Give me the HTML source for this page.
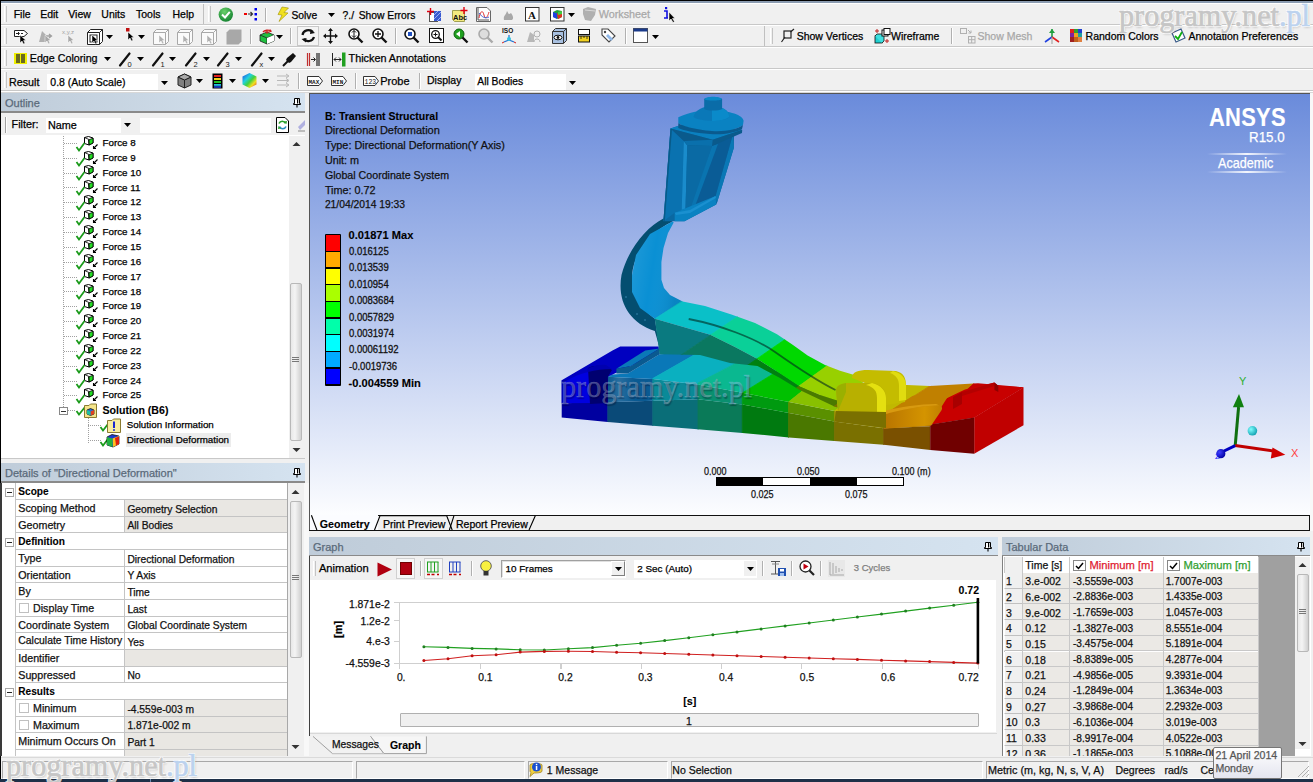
<!DOCTYPE html><html><head><meta charset="utf-8"><style>
*{margin:0;padding:0;box-sizing:border-box}
html,body{width:1313px;height:782px;overflow:hidden;background:#f0f0f0;font-family:"Liberation Sans",sans-serif}
.t{position:absolute;white-space:nowrap;line-height:1.15;-webkit-text-stroke:0.25px currentColor}
.r{position:absolute}
svg{position:absolute;overflow:visible}
</style></head><body><div class="r" style="left:0px;top:0px;width:1313px;height:1px;background:#000"></div>
<div class="r" style="left:0px;top:1px;width:1313px;height:2px;background:#8a9bb0"></div>
<div class="r" style="left:0px;top:3px;width:1313px;height:1px;background:#fff"></div>
<div class="r" style="left:0px;top:0px;width:1px;height:782px;background:#000"></div>
<div class="r" style="left:1px;top:24px;width:1312px;height:1px;background:#c8c8c8"></div>
<div class="r" style="left:1px;top:25px;width:1312px;height:1px;background:#fff"></div>
<div class="r" style="left:1px;top:46px;width:1312px;height:1px;background:#c8c8c8"></div>
<div class="r" style="left:1px;top:47px;width:1312px;height:1px;background:#fff"></div>
<div class="r" style="left:1px;top:68px;width:1312px;height:1px;background:#c8c8c8"></div>
<div class="r" style="left:1px;top:69px;width:1312px;height:1px;background:#fff"></div>
<div class="r" style="left:1px;top:90px;width:1312px;height:1px;background:#c8c8c8"></div>
<div class="r" style="left:1px;top:91px;width:1312px;height:1px;background:#fff"></div>
<div class="r" style="left:1px;top:92px;width:1312px;height:1px;background:#d8d8d8"></div>
<div class="r" style="left:1px;top:93px;width:304px;height:18.5px;background:linear-gradient(90deg,#bfccd9,#d5e3f0)"></div>
<div class="r" style="left:1px;top:111px;width:304px;height:1.5px;background:#8a8a8a"></div>
<div class="t" style="left:5px;top:96.8px;font-size:11px;color:#5a6a7a;">Outline</div>
<div class="r" style="left:1px;top:113px;width:304px;height:22px;background:#f0f0f0"></div>
<div class="r" style="left:1px;top:135px;width:304px;height:323px;background:#fff"></div>
<div class="r" style="left:1px;top:463px;width:304px;height:19px;background:linear-gradient(90deg,#bfccd9,#d5e3f0)"></div>
<div class="r" style="left:1px;top:481px;width:304px;height:1.5px;background:#8a8a8a"></div>
<div class="t" style="left:5px;top:466.8px;font-size:11px;color:#5a6a7a;">Details of "Directional Deformation"</div>
<div class="r" style="left:1px;top:483px;width:304px;height:273px;background:#fff"></div>
<div class="r" style="left:309px;top:93px;width:1002px;height:1px;background:#555"></div>
<div class="r" style="left:309px;top:93px;width:1px;height:438px;background:#555"></div>
<div class="r" style="left:310px;top:94px;width:1000px;height:421px;background:linear-gradient(180deg,rgb(106,139,219) 0%,rgb(252,253,255) 100%)"></div>
<div class="r" style="left:1310px;top:93px;width:1px;height:438px;background:#555"></div>
<div class="r" style="left:378px;top:515px;width:932px;height:1.2px;background:#111"></div>
<div class="r" style="left:378px;top:516px;width:932px;height:14px;background:#f0f0f0"></div>
<div class="r" style="left:310px;top:515px;width:68px;height:15px;background:#fbfcff"></div>
<div class="r" style="left:309px;top:530px;width:1002px;height:1px;background:#111"></div>
<div class="r" style="left:309px;top:537px;width:689px;height:19px;background:linear-gradient(90deg,#bfccd9,#d5e3f0)"></div>
<div class="r" style="left:309px;top:555px;width:689px;height:1.2px;background:#8a8a8a"></div>
<div class="t" style="left:313px;top:540.8px;font-size:11px;color:#5a6a7a;">Graph</div>
<div class="r" style="left:309px;top:556px;width:689px;height:24px;background:#f0f0f0"></div>
<div class="r" style="left:309px;top:580px;width:689px;height:152px;background:#fff"></div>
<div class="r" style="left:1002px;top:537px;width:309px;height:19px;background:linear-gradient(90deg,#bfccd9,#d5e3f0)"></div>
<div class="r" style="left:1002px;top:555px;width:311px;height:1.2px;background:#8a8a8a"></div>
<div class="t" style="left:1006px;top:540.8px;font-size:11px;color:#5a6a7a;">Tabular Data</div>
<div class="r" style="left:1002px;top:556px;width:309px;height:200px;background:#fff"></div>
<div class="r" style="left:1258px;top:556px;width:37px;height:200px;background:#a0a0a0"></div>
<div class="r" style="left:1px;top:756px;width:1312px;height:1px;background:#d0d0d0"></div>
<div class="r" style="left:1px;top:779px;width:1312px;height:3px;background:#1a2a3a"></div>
<div class="r" style="left:5px;top:117px;width:2px;height:16px;border-left:1px solid #a0a0a0;border-right:1px solid #fff"></div>
<div class="t" style="left:11.6px;top:117.5px;font-size:10.8px;color:#000;">Filter:</div>
<div class="r" style="left:46px;top:118px;width:87px;height:15px;background:#fff"></div>
<div class="r" style="left:121px;top:118px;width:12px;height:15px;background:#f0f0f0"></div>
<div class="t" style="left:48px;top:119px;font-size:10.8px;color:#000;">Name</div>
<svg style="left:124px;top:123px" width="8" height="5"><path d="M0 0H7L3.5 4Z" fill="#000"/></svg>
<div class="r" style="left:140px;top:118px;width:131px;height:15px;background:#fff"></div>
<svg style="left:276px;top:117px" width="13" height="16" viewBox="0 0 13 16"><path d="M0.5 0.5H9L12.5 4V15.5H0.5Z" fill="#fff" stroke="#000"/><path d="M3 6.5A3.5 3.5 0 0 1 9.5 6.5" fill="none" stroke="#2aa02a" stroke-width="1.6"/><path d="M8 4.5L10.5 7L11 4Z" fill="#2aa02a"/><path d="M10 9.5A3.5 3.5 0 0 1 3.5 9.5" fill="none" stroke="#2a8ac0" stroke-width="1.6"/><path d="M5 11.5L2.5 9L2 12Z" fill="#2aa02a"/></svg>
<svg style="left:296px;top:119px" width="9" height="14"><path d="M9 1L2 8L4 11L9 6Z" fill="#b0b0e0"/><path d="M2 12H9" stroke="#888"/></svg>
<div class="r" style="left:289px;top:136px;width:16px;height:322px;background:#f0f0f0"></div>
<svg style="left:292px;top:141px" width="10" height="6"><path d="M0.5 5L4.5 1L8.5 5Z" fill="#333"/></svg>
<svg style="left:292px;top:447px" width="10" height="6"><path d="M0.5 1L4.5 5L8.5 1Z" fill="#333"/></svg>
<div class="r" style="left:290px;top:283px;width:12px;height:158px;background:linear-gradient(90deg,#e8e8e8,#f4f4f4 40%,#d0d0d0);border:1px solid #b8b8b8;border-radius:2px"></div>
<svg style="left:292px;top:357px" width="8" height="6"><path d="M0 0.5H7M0 2.5H7M0 4.5H7" stroke="#777"/></svg>
<svg style="left:63px;top:136px" width="1" height="275"><line x1="0.5" y1="0" x2="0.5" y2="275" stroke="#a0a0a0" stroke-dasharray="1,1"/></svg>
<svg style="left:64px;top:142.9px" width="13" height="1"><line x1="0" y1="0.5" x2="13" y2="0.5" stroke="#a0a0a0" stroke-dasharray="1,1"/></svg>
<svg style="left:76px;top:135.70000000000002px" width="23" height="16" viewBox="0 0 23 16"><path d="M8.5 1.5L12.5 0.5L17 2V7L13 9L8.5 7.5Z" fill="#fff" stroke="#000" stroke-width="1"/><path d="M12.5 4L17 2.2V7L13 9Z" fill="#22dd22" stroke="#000" stroke-width="0.8"/><path d="M8.5 1.5L13 3.5V9" fill="none" stroke="#000" stroke-width="0.8"/><path d="M0.5 11L3 14.5L8.5 7" fill="none" stroke="#1a9a1a" stroke-width="1.8"/><path d="M21.5 8.5L17.5 12.5M17.5 10V12.5H20" fill="none" stroke="#000" stroke-width="1.1"/></svg>
<div class="t" style="left:102.5px;top:137.1px;font-size:9.8px;color:#000;">Force 8</div>
<svg style="left:64px;top:157.7px" width="13" height="1"><line x1="0" y1="0.5" x2="13" y2="0.5" stroke="#a0a0a0" stroke-dasharray="1,1"/></svg>
<svg style="left:76px;top:150.54700000000003px" width="23" height="16" viewBox="0 0 23 16"><path d="M8.5 1.5L12.5 0.5L17 2V7L13 9L8.5 7.5Z" fill="#fff" stroke="#000" stroke-width="1"/><path d="M12.5 4L17 2.2V7L13 9Z" fill="#22dd22" stroke="#000" stroke-width="0.8"/><path d="M8.5 1.5L13 3.5V9" fill="none" stroke="#000" stroke-width="0.8"/><path d="M0.5 11L3 14.5L8.5 7" fill="none" stroke="#1a9a1a" stroke-width="1.8"/><path d="M21.5 8.5L17.5 12.5M17.5 10V12.5H20" fill="none" stroke="#000" stroke-width="1.1"/></svg>
<div class="t" style="left:102.5px;top:151.947px;font-size:9.8px;color:#000;">Force 9</div>
<svg style="left:64px;top:172.6px" width="13" height="1"><line x1="0" y1="0.5" x2="13" y2="0.5" stroke="#a0a0a0" stroke-dasharray="1,1"/></svg>
<svg style="left:76px;top:165.394px" width="23" height="16" viewBox="0 0 23 16"><path d="M8.5 1.5L12.5 0.5L17 2V7L13 9L8.5 7.5Z" fill="#fff" stroke="#000" stroke-width="1"/><path d="M12.5 4L17 2.2V7L13 9Z" fill="#22dd22" stroke="#000" stroke-width="0.8"/><path d="M8.5 1.5L13 3.5V9" fill="none" stroke="#000" stroke-width="0.8"/><path d="M0.5 11L3 14.5L8.5 7" fill="none" stroke="#1a9a1a" stroke-width="1.8"/><path d="M21.5 8.5L17.5 12.5M17.5 10V12.5H20" fill="none" stroke="#000" stroke-width="1.1"/></svg>
<div class="t" style="left:102.5px;top:166.79399999999998px;font-size:9.8px;color:#000;">Force 10</div>
<svg style="left:64px;top:187.4px" width="13" height="1"><line x1="0" y1="0.5" x2="13" y2="0.5" stroke="#a0a0a0" stroke-dasharray="1,1"/></svg>
<svg style="left:76px;top:180.241px" width="23" height="16" viewBox="0 0 23 16"><path d="M8.5 1.5L12.5 0.5L17 2V7L13 9L8.5 7.5Z" fill="#fff" stroke="#000" stroke-width="1"/><path d="M12.5 4L17 2.2V7L13 9Z" fill="#22dd22" stroke="#000" stroke-width="0.8"/><path d="M8.5 1.5L13 3.5V9" fill="none" stroke="#000" stroke-width="0.8"/><path d="M0.5 11L3 14.5L8.5 7" fill="none" stroke="#1a9a1a" stroke-width="1.8"/><path d="M21.5 8.5L17.5 12.5M17.5 10V12.5H20" fill="none" stroke="#000" stroke-width="1.1"/></svg>
<div class="t" style="left:102.5px;top:181.641px;font-size:9.8px;color:#000;">Force 11</div>
<svg style="left:64px;top:202.3px" width="13" height="1"><line x1="0" y1="0.5" x2="13" y2="0.5" stroke="#a0a0a0" stroke-dasharray="1,1"/></svg>
<svg style="left:76px;top:195.08800000000002px" width="23" height="16" viewBox="0 0 23 16"><path d="M8.5 1.5L12.5 0.5L17 2V7L13 9L8.5 7.5Z" fill="#fff" stroke="#000" stroke-width="1"/><path d="M12.5 4L17 2.2V7L13 9Z" fill="#22dd22" stroke="#000" stroke-width="0.8"/><path d="M8.5 1.5L13 3.5V9" fill="none" stroke="#000" stroke-width="0.8"/><path d="M0.5 11L3 14.5L8.5 7" fill="none" stroke="#1a9a1a" stroke-width="1.8"/><path d="M21.5 8.5L17.5 12.5M17.5 10V12.5H20" fill="none" stroke="#000" stroke-width="1.1"/></svg>
<div class="t" style="left:102.5px;top:196.488px;font-size:9.8px;color:#000;">Force 12</div>
<svg style="left:64px;top:217.1px" width="13" height="1"><line x1="0" y1="0.5" x2="13" y2="0.5" stroke="#a0a0a0" stroke-dasharray="1,1"/></svg>
<svg style="left:76px;top:209.935px" width="23" height="16" viewBox="0 0 23 16"><path d="M8.5 1.5L12.5 0.5L17 2V7L13 9L8.5 7.5Z" fill="#fff" stroke="#000" stroke-width="1"/><path d="M12.5 4L17 2.2V7L13 9Z" fill="#22dd22" stroke="#000" stroke-width="0.8"/><path d="M8.5 1.5L13 3.5V9" fill="none" stroke="#000" stroke-width="0.8"/><path d="M0.5 11L3 14.5L8.5 7" fill="none" stroke="#1a9a1a" stroke-width="1.8"/><path d="M21.5 8.5L17.5 12.5M17.5 10V12.5H20" fill="none" stroke="#000" stroke-width="1.1"/></svg>
<div class="t" style="left:102.5px;top:211.33499999999998px;font-size:9.8px;color:#000;">Force 13</div>
<svg style="left:64px;top:232.0px" width="13" height="1"><line x1="0" y1="0.5" x2="13" y2="0.5" stroke="#a0a0a0" stroke-dasharray="1,1"/></svg>
<svg style="left:76px;top:224.782px" width="23" height="16" viewBox="0 0 23 16"><path d="M8.5 1.5L12.5 0.5L17 2V7L13 9L8.5 7.5Z" fill="#fff" stroke="#000" stroke-width="1"/><path d="M12.5 4L17 2.2V7L13 9Z" fill="#22dd22" stroke="#000" stroke-width="0.8"/><path d="M8.5 1.5L13 3.5V9" fill="none" stroke="#000" stroke-width="0.8"/><path d="M0.5 11L3 14.5L8.5 7" fill="none" stroke="#1a9a1a" stroke-width="1.8"/><path d="M21.5 8.5L17.5 12.5M17.5 10V12.5H20" fill="none" stroke="#000" stroke-width="1.1"/></svg>
<div class="t" style="left:102.5px;top:226.182px;font-size:9.8px;color:#000;">Force 14</div>
<svg style="left:64px;top:246.8px" width="13" height="1"><line x1="0" y1="0.5" x2="13" y2="0.5" stroke="#a0a0a0" stroke-dasharray="1,1"/></svg>
<svg style="left:76px;top:239.62900000000002px" width="23" height="16" viewBox="0 0 23 16"><path d="M8.5 1.5L12.5 0.5L17 2V7L13 9L8.5 7.5Z" fill="#fff" stroke="#000" stroke-width="1"/><path d="M12.5 4L17 2.2V7L13 9Z" fill="#22dd22" stroke="#000" stroke-width="0.8"/><path d="M8.5 1.5L13 3.5V9" fill="none" stroke="#000" stroke-width="0.8"/><path d="M0.5 11L3 14.5L8.5 7" fill="none" stroke="#1a9a1a" stroke-width="1.8"/><path d="M21.5 8.5L17.5 12.5M17.5 10V12.5H20" fill="none" stroke="#000" stroke-width="1.1"/></svg>
<div class="t" style="left:102.5px;top:241.029px;font-size:9.8px;color:#000;">Force 15</div>
<svg style="left:64px;top:261.7px" width="13" height="1"><line x1="0" y1="0.5" x2="13" y2="0.5" stroke="#a0a0a0" stroke-dasharray="1,1"/></svg>
<svg style="left:76px;top:254.476px" width="23" height="16" viewBox="0 0 23 16"><path d="M8.5 1.5L12.5 0.5L17 2V7L13 9L8.5 7.5Z" fill="#fff" stroke="#000" stroke-width="1"/><path d="M12.5 4L17 2.2V7L13 9Z" fill="#22dd22" stroke="#000" stroke-width="0.8"/><path d="M8.5 1.5L13 3.5V9" fill="none" stroke="#000" stroke-width="0.8"/><path d="M0.5 11L3 14.5L8.5 7" fill="none" stroke="#1a9a1a" stroke-width="1.8"/><path d="M21.5 8.5L17.5 12.5M17.5 10V12.5H20" fill="none" stroke="#000" stroke-width="1.1"/></svg>
<div class="t" style="left:102.5px;top:255.87599999999998px;font-size:9.8px;color:#000;">Force 16</div>
<svg style="left:64px;top:276.5px" width="13" height="1"><line x1="0" y1="0.5" x2="13" y2="0.5" stroke="#a0a0a0" stroke-dasharray="1,1"/></svg>
<svg style="left:76px;top:269.32300000000004px" width="23" height="16" viewBox="0 0 23 16"><path d="M8.5 1.5L12.5 0.5L17 2V7L13 9L8.5 7.5Z" fill="#fff" stroke="#000" stroke-width="1"/><path d="M12.5 4L17 2.2V7L13 9Z" fill="#22dd22" stroke="#000" stroke-width="0.8"/><path d="M8.5 1.5L13 3.5V9" fill="none" stroke="#000" stroke-width="0.8"/><path d="M0.5 11L3 14.5L8.5 7" fill="none" stroke="#1a9a1a" stroke-width="1.8"/><path d="M21.5 8.5L17.5 12.5M17.5 10V12.5H20" fill="none" stroke="#000" stroke-width="1.1"/></svg>
<div class="t" style="left:102.5px;top:270.723px;font-size:9.8px;color:#000;">Force 17</div>
<svg style="left:64px;top:291.4px" width="13" height="1"><line x1="0" y1="0.5" x2="13" y2="0.5" stroke="#a0a0a0" stroke-dasharray="1,1"/></svg>
<svg style="left:76px;top:284.17px" width="23" height="16" viewBox="0 0 23 16"><path d="M8.5 1.5L12.5 0.5L17 2V7L13 9L8.5 7.5Z" fill="#fff" stroke="#000" stroke-width="1"/><path d="M12.5 4L17 2.2V7L13 9Z" fill="#22dd22" stroke="#000" stroke-width="0.8"/><path d="M8.5 1.5L13 3.5V9" fill="none" stroke="#000" stroke-width="0.8"/><path d="M0.5 11L3 14.5L8.5 7" fill="none" stroke="#1a9a1a" stroke-width="1.8"/><path d="M21.5 8.5L17.5 12.5M17.5 10V12.5H20" fill="none" stroke="#000" stroke-width="1.1"/></svg>
<div class="t" style="left:102.5px;top:285.57px;font-size:9.8px;color:#000;">Force 18</div>
<svg style="left:64px;top:306.2px" width="13" height="1"><line x1="0" y1="0.5" x2="13" y2="0.5" stroke="#a0a0a0" stroke-dasharray="1,1"/></svg>
<svg style="left:76px;top:299.017px" width="23" height="16" viewBox="0 0 23 16"><path d="M8.5 1.5L12.5 0.5L17 2V7L13 9L8.5 7.5Z" fill="#fff" stroke="#000" stroke-width="1"/><path d="M12.5 4L17 2.2V7L13 9Z" fill="#22dd22" stroke="#000" stroke-width="0.8"/><path d="M8.5 1.5L13 3.5V9" fill="none" stroke="#000" stroke-width="0.8"/><path d="M0.5 11L3 14.5L8.5 7" fill="none" stroke="#1a9a1a" stroke-width="1.8"/><path d="M21.5 8.5L17.5 12.5M17.5 10V12.5H20" fill="none" stroke="#000" stroke-width="1.1"/></svg>
<div class="t" style="left:102.5px;top:300.417px;font-size:9.8px;color:#000;">Force 19</div>
<svg style="left:64px;top:321.1px" width="13" height="1"><line x1="0" y1="0.5" x2="13" y2="0.5" stroke="#a0a0a0" stroke-dasharray="1,1"/></svg>
<svg style="left:76px;top:313.864px" width="23" height="16" viewBox="0 0 23 16"><path d="M8.5 1.5L12.5 0.5L17 2V7L13 9L8.5 7.5Z" fill="#fff" stroke="#000" stroke-width="1"/><path d="M12.5 4L17 2.2V7L13 9Z" fill="#22dd22" stroke="#000" stroke-width="0.8"/><path d="M8.5 1.5L13 3.5V9" fill="none" stroke="#000" stroke-width="0.8"/><path d="M0.5 11L3 14.5L8.5 7" fill="none" stroke="#1a9a1a" stroke-width="1.8"/><path d="M21.5 8.5L17.5 12.5M17.5 10V12.5H20" fill="none" stroke="#000" stroke-width="1.1"/></svg>
<div class="t" style="left:102.5px;top:315.26399999999995px;font-size:9.8px;color:#000;">Force 20</div>
<svg style="left:64px;top:335.9px" width="13" height="1"><line x1="0" y1="0.5" x2="13" y2="0.5" stroke="#a0a0a0" stroke-dasharray="1,1"/></svg>
<svg style="left:76px;top:328.711px" width="23" height="16" viewBox="0 0 23 16"><path d="M8.5 1.5L12.5 0.5L17 2V7L13 9L8.5 7.5Z" fill="#fff" stroke="#000" stroke-width="1"/><path d="M12.5 4L17 2.2V7L13 9Z" fill="#22dd22" stroke="#000" stroke-width="0.8"/><path d="M8.5 1.5L13 3.5V9" fill="none" stroke="#000" stroke-width="0.8"/><path d="M0.5 11L3 14.5L8.5 7" fill="none" stroke="#1a9a1a" stroke-width="1.8"/><path d="M21.5 8.5L17.5 12.5M17.5 10V12.5H20" fill="none" stroke="#000" stroke-width="1.1"/></svg>
<div class="t" style="left:102.5px;top:330.111px;font-size:9.8px;color:#000;">Force 21</div>
<svg style="left:64px;top:350.8px" width="13" height="1"><line x1="0" y1="0.5" x2="13" y2="0.5" stroke="#a0a0a0" stroke-dasharray="1,1"/></svg>
<svg style="left:76px;top:343.55800000000005px" width="23" height="16" viewBox="0 0 23 16"><path d="M8.5 1.5L12.5 0.5L17 2V7L13 9L8.5 7.5Z" fill="#fff" stroke="#000" stroke-width="1"/><path d="M12.5 4L17 2.2V7L13 9Z" fill="#22dd22" stroke="#000" stroke-width="0.8"/><path d="M8.5 1.5L13 3.5V9" fill="none" stroke="#000" stroke-width="0.8"/><path d="M0.5 11L3 14.5L8.5 7" fill="none" stroke="#1a9a1a" stroke-width="1.8"/><path d="M21.5 8.5L17.5 12.5M17.5 10V12.5H20" fill="none" stroke="#000" stroke-width="1.1"/></svg>
<div class="t" style="left:102.5px;top:344.958px;font-size:9.8px;color:#000;">Force 22</div>
<svg style="left:64px;top:365.6px" width="13" height="1"><line x1="0" y1="0.5" x2="13" y2="0.5" stroke="#a0a0a0" stroke-dasharray="1,1"/></svg>
<svg style="left:76px;top:358.40500000000003px" width="23" height="16" viewBox="0 0 23 16"><path d="M8.5 1.5L12.5 0.5L17 2V7L13 9L8.5 7.5Z" fill="#fff" stroke="#000" stroke-width="1"/><path d="M12.5 4L17 2.2V7L13 9Z" fill="#22dd22" stroke="#000" stroke-width="0.8"/><path d="M8.5 1.5L13 3.5V9" fill="none" stroke="#000" stroke-width="0.8"/><path d="M0.5 11L3 14.5L8.5 7" fill="none" stroke="#1a9a1a" stroke-width="1.8"/><path d="M21.5 8.5L17.5 12.5M17.5 10V12.5H20" fill="none" stroke="#000" stroke-width="1.1"/></svg>
<div class="t" style="left:102.5px;top:359.805px;font-size:9.8px;color:#000;">Force 23</div>
<svg style="left:64px;top:380.5px" width="13" height="1"><line x1="0" y1="0.5" x2="13" y2="0.5" stroke="#a0a0a0" stroke-dasharray="1,1"/></svg>
<svg style="left:76px;top:373.252px" width="23" height="16" viewBox="0 0 23 16"><path d="M8.5 1.5L12.5 0.5L17 2V7L13 9L8.5 7.5Z" fill="#fff" stroke="#000" stroke-width="1"/><path d="M12.5 4L17 2.2V7L13 9Z" fill="#22dd22" stroke="#000" stroke-width="0.8"/><path d="M8.5 1.5L13 3.5V9" fill="none" stroke="#000" stroke-width="0.8"/><path d="M0.5 11L3 14.5L8.5 7" fill="none" stroke="#1a9a1a" stroke-width="1.8"/><path d="M21.5 8.5L17.5 12.5M17.5 10V12.5H20" fill="none" stroke="#000" stroke-width="1.1"/></svg>
<div class="t" style="left:102.5px;top:374.652px;font-size:9.8px;color:#000;">Force 24</div>
<svg style="left:64px;top:395.3px" width="13" height="1"><line x1="0" y1="0.5" x2="13" y2="0.5" stroke="#a0a0a0" stroke-dasharray="1,1"/></svg>
<svg style="left:76px;top:388.099px" width="23" height="16" viewBox="0 0 23 16"><path d="M8.5 1.5L12.5 0.5L17 2V7L13 9L8.5 7.5Z" fill="#fff" stroke="#000" stroke-width="1"/><path d="M12.5 4L17 2.2V7L13 9Z" fill="#22dd22" stroke="#000" stroke-width="0.8"/><path d="M8.5 1.5L13 3.5V9" fill="none" stroke="#000" stroke-width="0.8"/><path d="M0.5 11L3 14.5L8.5 7" fill="none" stroke="#1a9a1a" stroke-width="1.8"/><path d="M21.5 8.5L17.5 12.5M17.5 10V12.5H20" fill="none" stroke="#000" stroke-width="1.1"/></svg>
<div class="t" style="left:102.5px;top:389.49899999999997px;font-size:9.8px;color:#000;">Force 25</div>
<div class="r" style="left:59px;top:407px;width:9px;height:8px;background:#fff;border:1px solid #888"></div>
<div class="r" style="left:61px;top:410.5px;width:5px;height:1px;background:#333"></div>
<svg style="left:68px;top:410px" width="8" height="1"><line x1="0" y1="0.5" x2="8" y2="0.5" stroke="#a0a0a0" stroke-dasharray="1,1"/></svg>
<svg style="left:76px;top:403px" width="25" height="16" viewBox="0 0 25 16"><path d="M0.5 8L3 11.5L9 4" fill="none" stroke="#1a9a1a" stroke-width="1.8"/><path d="M8.5 2.5H13L14.5 1H20.5V14.5H8.5Z" fill="#f4e48a" stroke="#8a7a30"/><path d="M11 7L14.5 5.5L18 7V11L14.5 12.5L11 11Z" fill="#2a6ad0" stroke="#000" stroke-width="0.7"/><path d="M14.5 8.5L18 7V11L14.5 12.5Z" fill="#e04020"/><path d="M11 7L14.5 8.5V12.5L11 11Z" fill="#20c0a0"/></svg>
<div class="t" style="left:102.5px;top:404.4px;font-size:10.6px;color:#000;font-weight:bold;-webkit-text-stroke:0.1px currentColor;">Solution (B6)</div>
<svg style="left:88px;top:418px" width="1" height="26"><line x1="0.5" y1="0" x2="0.5" y2="26" stroke="#a0a0a0" stroke-dasharray="1,1"/></svg>
<svg style="left:88px;top:424.5px" width="13" height="1"><line x1="0" y1="0.5" x2="13" y2="0.5" stroke="#a0a0a0" stroke-dasharray="1,1"/></svg>
<svg style="left:100px;top:417.5px" width="25" height="16" viewBox="0 0 25 16"><path d="M0.5 9L3 12.5L8 6" fill="none" stroke="#1a9a1a" stroke-width="1.8"/><path d="M7.5 2.5H12L13.5 1H20.5V14.5H7.5Z" fill="#f8eea0" stroke="#8a7a30"/><path d="M14 3.5V10" stroke="#1a2ad0" stroke-width="2"/><circle cx="14" cy="12" r="1" fill="#1a2ad0"/></svg>
<div class="t" style="left:126.7px;top:419.2px;font-size:9.8px;color:#000;">Solution Information</div>
<svg style="left:88px;top:439.7px" width="13" height="1"><line x1="0" y1="0.5" x2="13" y2="0.5" stroke="#a0a0a0" stroke-dasharray="1,1"/></svg>
<div class="r" style="left:126px;top:432.8px;width:105px;height:14px;background:#ececec"></div>
<svg style="left:100px;top:432.7px" width="25" height="16" viewBox="0 0 25 16"><path d="M0.5 9L3 12.5L8 6" fill="none" stroke="#1a9a1a" stroke-width="1.8"/><path d="M7 4L12 1.5L19 3V11L13 14L7 12Z" fill="#1a3ad0" stroke="#000" stroke-width="0.7"/><path d="M12.5 5.5L19 3V11L13 14Z" fill="#ffc020"/><path d="M15 5L19 3.5V11L16 12.5Z" fill="#e02010"/><path d="M7 4L12.5 5.5V14L7 12Z" fill="#20b040"/></svg>
<div class="t" style="left:126.7px;top:434.4px;font-size:9.8px;color:#000;">Directional Deformation</div>
<div class="r" style="left:1px;top:458px;width:304px;height:1px;background:#c8c8c8"></div>
<div class="r" style="left:4px;top:6px;width:3px;height:16px;border-left:1px solid #fff;border-right:1.5px solid #c4c4c4"></div>
<div class="t" style="left:13.7px;top:8.2px;font-size:10.5px;color:#000;">File</div>
<div class="t" style="left:40.2px;top:8.2px;font-size:10.5px;color:#000;">Edit</div>
<div class="t" style="left:68.3px;top:8.2px;font-size:10.5px;color:#000;">View</div>
<div class="t" style="left:101.3px;top:8.2px;font-size:10.5px;color:#000;">Units</div>
<div class="t" style="left:136px;top:8.2px;font-size:10.5px;color:#000;">Tools</div>
<div class="t" style="left:172.5px;top:8.2px;font-size:10.5px;color:#000;">Help</div>
<div class="r" style="left:203px;top:4px;width:1px;height:20px;background:#c0c0c0"></div>
<div class="r" style="left:208px;top:6px;width:3px;height:16px;border-left:1px solid #fff;border-right:1.5px solid #c4c4c4"></div>
<svg style="left:218px;top:7px" width="16" height="16" viewBox="0 0 16 16"><defs><radialGradient id="gc" cx="0.4" cy="0.3" r="0.8"><stop offset="0" stop-color="#6ad06a"/><stop offset="1" stop-color="#0a7a2a"/></radialGradient></defs><circle cx="7.8" cy="7.6" r="7.2" fill="url(#gc)"/><path d="M4 7.5L7 10.5L11.8 4.8" fill="none" stroke="#fff" stroke-width="2"/></svg>
<svg style="left:244px;top:8px" width="14" height="13" viewBox="0 0 14 13"><rect x="0" y="5" width="3" height="2" fill="#e00"/><path d="M4 6H8M6.5 4L8.5 6L6.5 8" stroke="#333" fill="none" stroke-width="1.2"/><rect x="10.5" y="0" width="2.5" height="2.5" fill="#00e"/><rect x="10.5" y="5" width="2.5" height="2.5" fill="#00e"/><rect x="10.5" y="10" width="2.5" height="2.5" fill="#00e"/></svg>
<div class="r" style="left:265px;top:8px;width:2px;height:14px;border-left:1px solid #b0b0b0;border-right:1px solid #fff"></div>
<svg style="left:277px;top:7px" width="12" height="15" viewBox="0 0 12 15"><path d="M5 0L11.5 1L7 5.5L11 6L2 14.5L5 8L1 7.5Z" fill="#f0e020" stroke="#a09000" stroke-width="0.6"/></svg>
<div class="t" style="left:291.4px;top:9.6px;font-size:10.3px;color:#000;">Solve</div>
<svg style="left:328px;top:13px" width="7" height="4"><path d="M0 0H7L3.5 4Z" fill="#000"/></svg>
<div class="t" style="left:342.6px;top:9.6px;font-size:10.3px;color:#000;">?./</div>
<div class="t" style="left:358.7px;top:9.6px;font-size:10.3px;color:#000;">Show Errors</div>
<svg style="left:426px;top:8px" width="17" height="15" viewBox="0 0 17 15"><rect x="3.5" y="4.5" width="8" height="9" fill="#fff" stroke="#555"/><path d="M8 3H15V13H8Z" fill="#3a5ad0"/><path d="M8 11L15 4M8 7L12 3M11 13L15 9" stroke="#9ab0f0"/><path d="M4.5 0V7M1 3.5H8" stroke="#e00010" stroke-width="1.4"/></svg>
<svg style="left:452px;top:7px" width="16" height="15" viewBox="0 0 16 15"><path d="M0.5 3.5H12.5V14.5H2.5L0.5 12.5Z" fill="#f4ea80" stroke="#a0a050"/><text x="1" y="12.5" font-family="Liberation Sans" font-weight="bold" font-size="7.5" fill="#111">Abc</text><path d="M12 0V7M8.5 3.5H15.5" stroke="#e00010" stroke-width="1.4"/></svg>
<svg style="left:476px;top:7px" width="15" height="15" viewBox="0 0 15 15"><path d="M0.5 0.5H11L14.5 4V14.5H0.5Z" fill="#fff" stroke="#666"/><path d="M2 1V13H13" stroke="#555" fill="none"/><path d="M3 11C5 2 7 4 8 8S11 12 13 5" stroke="#e03030" fill="none"/><path d="M3 6C6 10 9 12 13 10" stroke="#4060d0" fill="none"/></svg>
<svg style="left:503px;top:10px" width="11" height="11" viewBox="0 0 11 11"><path d="M1 10C0 6 3 5 4 1C6 4 5 5 8 3C10 6 11 8 9 10Z" fill="#a8a8a8"/></svg>
<svg style="left:525px;top:7px" width="15" height="15" viewBox="0 0 15 15"><rect x="0.5" y="0.5" width="13.5" height="13.5" fill="#fff" stroke="#333"/><text x="3" y="12" font-family="Liberation Serif" font-weight="bold" font-size="11" fill="#111">A</text></svg>
<svg style="left:550px;top:7px" width="15" height="15" viewBox="0 0 15 15"><rect x="0.5" y="0.5" width="13.5" height="13.5" fill="#fff" stroke="#333"/><path d="M3 5L7 3L12 4V10L8 12L3 10Z" fill="#20a040"/><path d="M3 5L7 6.5V12L3 10Z" fill="#2040e0"/><path d="M7 6.5L12 4V10L8 12Z" fill="#e03020"/><path d="M8 5L12 4V7L8 8Z" fill="#40d040"/></svg>
<svg style="left:568px;top:13px" width="7" height="4"><path d="M0 0H7L3.5 4Z" fill="#000"/></svg>
<svg style="left:582px;top:7px" width="15" height="15" viewBox="0 0 15 15"><path d="M1 2L6 0L14 2L13 8L9 14L3 13L1 7Z" fill="#b0b0b0"/><path d="M3 3L13 4" stroke="#d8d8d8"/></svg>
<div class="t" style="left:598.7px;top:8.2px;font-size:10.8px;color:#a8a8a8;">Worksheet</div>
<svg style="left:664px;top:6px" width="13" height="17" viewBox="0 0 13 17"><rect x="1" y="1" width="2.2" height="2.2" fill="#1010e0"/><path d="M0 5H3V12H4M0 12H4" stroke="#1010e0" stroke-width="1.6" fill="none"/><path d="M5 6V15L7 13L9 16.5L10.5 15.5L8.5 12.5H11Z" fill="#000" stroke="#fff" stroke-width="0.6"/></svg>
<div class="r" style="left:4px;top:28px;width:3px;height:16px;border-left:1px solid #fff;border-right:1.5px solid #c4c4c4"></div>
<svg style="left:14px;top:29px" width="15" height="15" viewBox="0 0 15 15"><path d="M0.5 1.5H10L13.5 4.5L10 7.5H0.5Z" fill="#fff" stroke="#222"/><path d="M2 4.5H5M4 3L5.5 4.5L4 6M7 4.5H9" stroke="#222" fill="none"/><path d="M6 6V14L8 12L9.5 15L11 14.3L9.6 11.5H12Z" fill="#000" stroke="#fff" stroke-width="0.5"/></svg>
<svg style="left:38px;top:29px" width="15" height="15" viewBox="0 0 15 15"><path d="M1 13L4 2L8 6V13Z" fill="#b0b0b0"/><path d="M6 7H13M11 5L13.5 7L11 9" stroke="#a0a0a0" fill="none" stroke-width="1.3"/><path d="M7 6V14L9 12L10.5 15L12 14.3L10.6 11.5H13Z" fill="#a8a8a8" stroke="#fff" stroke-width="0.5"/></svg>
<svg style="left:62px;top:28px" width="16" height="16" viewBox="0 0 16 16"><text x="0" y="6" font-family="Liberation Sans" font-size="6" fill="#a0a0a0">x,y,z</text><path d="M6 7V15L8 13L9.5 16L11 15.3L9.6 12.5H12Z" fill="#a8a8a8" stroke="#fff" stroke-width="0.5"/></svg>
<svg style="left:87px;top:29px" width="16" height="16" viewBox="0 0 16 16"><path d="M0.5 3.5L3.5 0.5H15.5V12.5L12.5 15.5H0.5Z" fill="#fff" stroke="#222"/><path d="M0.5 3.5H12.5V15.5M12.5 3.5L15.5 0.5" stroke="#222" fill="none"/><rect x="3" y="6" width="7" height="7" fill="none" stroke="#222"/><path d="M5 6V14L7 12L8.5 15L10 14.3L8.6 11.5H11Z" fill="#000" stroke="#fff" stroke-width="0.5"/></svg>
<svg style="left:105.5px;top:35px" width="7" height="4"><path d="M0 0H7L3.5 4Z" fill="#000"/></svg>
<svg style="left:126px;top:28px" width="12" height="17" viewBox="0 0 12 17"><rect x="0" y="0" width="3.5" height="3.5" fill="#c01010"/><path d="M2 4V12L4 10L5.5 13L7 12.3L5.6 9.5H8Z" fill="#000" stroke="#fff" stroke-width="0.5"/></svg>
<svg style="left:138px;top:35px" width="7" height="4"><path d="M0 0H7L3.5 4Z" fill="#000"/></svg>
<svg style="left:153px;top:29px" width="16" height="16" viewBox="0 0 16 16"><path d="M0.5 3.5L3.5 0.5H15.5V12.5L12.5 15.5H0.5Z" fill="#fafafa" stroke="#a8a8a8"/><path d="M0.5 3.5H12.5V15.5M12.5 3.5L15.5 0.5" stroke="#a8a8a8" fill="none"/><path d="M6 6V14L8 12L9.5 15L11 14.3L9.6 11.5H12Z" fill="#b0b0b0" stroke="#fff" stroke-width="0.5"/></svg>
<svg style="left:177px;top:29px" width="16" height="16" viewBox="0 0 16 16"><path d="M0.5 3.5L3.5 0.5H15.5V12.5L12.5 15.5H0.5Z" fill="#fafafa" stroke="#a8a8a8"/><path d="M0.5 3.5H12.5V15.5M12.5 3.5L15.5 0.5" stroke="#a8a8a8" fill="none"/><path d="M6 6V14L8 12L9.5 15L11 14.3L9.6 11.5H12Z" fill="#b0b0b0" stroke="#fff" stroke-width="0.5"/></svg>
<svg style="left:201px;top:29px" width="16" height="16" viewBox="0 0 16 16"><path d="M0.5 3.5L3.5 0.5H15.5V12.5L12.5 15.5H0.5Z" fill="#fafafa" stroke="#a8a8a8"/><path d="M0.5 3.5H12.5V15.5M12.5 3.5L15.5 0.5" stroke="#a8a8a8" fill="none"/><path d="M6 6V14L8 12L9.5 15L11 14.3L9.6 11.5H12Z" fill="#b0b0b0" stroke="#fff" stroke-width="0.5"/></svg>
<svg style="left:226px;top:29px" width="16" height="16" viewBox="0 0 16 16"><path d="M0.5 3.5L3.5 0.5H15.5V12.5L12.5 15.5H0.5Z" fill="#a8a8a8"/></svg>
<div class="r" style="left:250px;top:29px;width:2px;height:15px;border-left:1px solid #b0b0b0;border-right:1px solid #fff"></div>
<svg style="left:259px;top:28px" width="16" height="17" viewBox="0 0 16 17"><path d="M1 7L8 4L15 7V13L8 16L1 13Z" fill="#20c040" stroke="#222" stroke-width="0.8"/><path d="M1 7L8 10L15 7M8 10V16" stroke="#222" fill="none" stroke-width="0.8"/><path d="M8 10L15 7V13L8 16Z" fill="#fff"/><path d="M4 4A5 3 0 0 1 12 3" fill="none" stroke="#d02020" stroke-width="1.3"/><path d="M11 1L13 3.5L10 4.5Z" fill="#d02020"/><path d="M8 2V6M6 4H10" stroke="#d02020"/></svg>
<svg style="left:276px;top:35px" width="7" height="4"><path d="M0 0H7L3.5 4Z" fill="#000"/></svg>
<div class="r" style="left:290px;top:28px;width:2px;height:16px;border-left:1px solid #b0b0b0;border-right:1px solid #fff"></div>
<div class="r" style="left:297px;top:26px;width:22px;height:20px;border:1px solid #c8c8c8;background:#f4f4f4"></div>
<svg style="left:300px;top:28px" width="17" height="16" viewBox="0 0 17 16"><path d="M13 4A6 5.5 0 0 0 2.5 7" fill="none" stroke="#111" stroke-width="2.2"/><path d="M10.5 1.5L15 5L10 6Z" fill="#111"/><path d="M3.5 11A6 5.5 0 0 0 14 9" fill="none" stroke="#111" stroke-width="2.2"/><path d="M6 14.5L1.5 11L6.5 10Z" fill="#111"/></svg>
<svg style="left:323px;top:28px" width="15" height="16" viewBox="0 0 15 16"><path d="M7.5 1V15M1 8H14" stroke="#111" stroke-width="1.4"/><path d="M7.5 0L5 3H10ZM7.5 16L5 13H10ZM0 8L3 5.5V10.5ZM15 8L12 5.5V10.5Z" fill="#111"/></svg>
<svg style="left:348px;top:28px" width="15" height="16" viewBox="0 0 15 16"><circle cx="6" cy="6" r="5" fill="#fff" stroke="#111" stroke-width="1.6"/><path d="M9.5 9.5L14.5 14.5" stroke="#111" stroke-width="2.4"/><path d="M6 2.5V9.5M4 4.5L6 2.5L8 4.5M4 7.5L6 9.5L8 7.5" stroke="#111" fill="none"/></svg>
<svg style="left:372px;top:28px" width="15" height="16" viewBox="0 0 15 16"><circle cx="6" cy="6" r="5" fill="#fff" stroke="#111" stroke-width="1.6"/><path d="M9.5 9.5L14.5 14.5" stroke="#111" stroke-width="2.4"/><path d="M6 3V9M3 6H9" stroke="#111" stroke-width="1.3"/></svg>
<div class="r" style="left:395px;top:28px;width:2px;height:16px;border-left:1px solid #b0b0b0;border-right:1px solid #fff"></div>
<svg style="left:404px;top:28px" width="15" height="16" viewBox="0 0 15 16"><circle cx="6" cy="6" r="5" fill="#fff" stroke="#111" stroke-width="1.6"/><path d="M9.5 9.5L14.5 14.5" stroke="#111" stroke-width="2.4"/><rect x="4" y="4" width="4" height="4" fill="#2050c0"/></svg>
<svg style="left:429px;top:28px" width="15" height="16" viewBox="0 0 15 16"><rect x="0.5" y="0.5" width="14" height="14" fill="#fff" stroke="#111"/><circle cx="6.5" cy="6.5" r="3.8" fill="#fff" stroke="#111" stroke-width="1.3"/><path d="M9 9L12.5 12.5" stroke="#111" stroke-width="2"/><path d="M6.5 4.5V8.5M4.5 6.5H8.5" stroke="#111"/></svg>
<svg style="left:453px;top:28px" width="15" height="16" viewBox="0 0 15 16"><circle cx="6" cy="6" r="5" fill="#20a020" stroke="#0a600a" stroke-width="1"/><path d="M9.5 9.5L14.5 14.5" stroke="#111" stroke-width="2.4"/><path d="M3 6L7 3V9Z" fill="#fff"/></svg>
<svg style="left:478px;top:28px" width="15" height="16" viewBox="0 0 15 16"><circle cx="6" cy="6" r="5" fill="#ddd" stroke="#aaa" stroke-width="1.6"/><path d="M9.5 9.5L14.5 14.5" stroke="#aaa" stroke-width="2.4"/></svg>
<svg style="left:501px;top:27px" width="17" height="18" viewBox="0 0 17 18"><text x="1" y="6" font-family="Liberation Sans" font-weight="bold" font-size="6.5" fill="#111">ISO</text><path d="M8 8V13M3 15L8 13L13 15" stroke="#2070d0" stroke-width="1.2" fill="none"/><circle cx="8" cy="12" r="2" fill="#30c0e0"/><path d="M3 15L1 16M13 15L15 16" stroke="#d02020"/></svg>
<svg style="left:526px;top:29px" width="16" height="15" viewBox="0 0 16 15"><path d="M1 13L4 3L8 6V13Z" fill="#b8b8b8"/><circle cx="11" cy="5" r="3" fill="none" stroke="#b0b0b0"/><path d="M8 13C8 9 14 9 14 13" fill="none" stroke="#b0b0b0"/></svg>
<svg style="left:552px;top:28px" width="15" height="16" viewBox="0 0 15 16"><path d="M0.5 3.5L3.5 0.5H14.5V12.5L11.5 15.5H0.5Z" fill="#a8c0e0" stroke="#333"/><path d="M0.5 3.5H11.5V15.5M11.5 3.5L14.5 0.5" stroke="#333" fill="none"/><ellipse cx="6" cy="9.5" rx="4" ry="2.3" fill="#fff" stroke="#111"/><circle cx="6" cy="9.5" r="1.4" fill="#111"/></svg>
<svg style="left:578px;top:29px" width="12" height="15" viewBox="0 0 12 15"><rect x="0.5" y="0.5" width="11" height="5" fill="#fff" stroke="#111"/><rect x="0.5" y="7" width="11" height="6" fill="#f0d020" stroke="#111"/><path d="M3 7V10M6 7V9M9 7V10" stroke="#111" stroke-width="0.8"/></svg>
<svg style="left:601px;top:28px" width="15" height="16" viewBox="0 0 15 16"><path d="M1 1H7L14 8L8 14L1 7Z" fill="#fff" stroke="#444" stroke-width="1.1"/><path d="M7 6L12 11L10 13L5 8Z" fill="#90b8e8"/><circle cx="4" cy="4" r="1.2" fill="#444"/></svg>
<div class="r" style="left:625px;top:28px;width:2px;height:16px;border-left:1px solid #b0b0b0;border-right:1px solid #fff"></div>
<svg style="left:633px;top:28px" width="15" height="16" viewBox="0 0 15 16"><rect x="0.5" y="0.5" width="14" height="14" fill="#fff" stroke="#555"/><rect x="0.5" y="0.5" width="14" height="3" fill="#1a3a8a"/></svg>
<svg style="left:652px;top:35px" width="7" height="4"><path d="M0 0H7L3.5 4Z" fill="#000"/></svg>
<div class="r" style="left:764px;top:26px;width:1px;height:20px;background:#c0c0c0"></div>
<div class="r" style="left:770px;top:28px;width:3px;height:16px;border-left:1px solid #fff;border-right:1.5px solid #c4c4c4"></div>
<svg style="left:781px;top:29px" width="13" height="14" viewBox="0 0 13 14"><rect x="3" y="2" width="7" height="7" fill="none" stroke="#222" stroke-width="1.2"/><path d="M0.5 13L4 8M9.5 3L13 0" stroke="#222" stroke-width="1.2"/></svg>
<div class="t" style="left:796.7px;top:30.2px;font-size:10.5px;color:#000;">Show Vertices</div>
<svg style="left:874px;top:28px" width="17" height="17" viewBox="0 0 17 17"><rect x="1" y="8" width="7" height="7" fill="#20d0d0" stroke="#111" stroke-width="0.8"/><path d="M1 8L3 6H10V13L8 15" fill="#40e0e0" stroke="#111" stroke-width="0.8"/><rect x="8" y="2" width="6" height="6" fill="#fff" stroke="#111"/><rect x="10" y="0.5" width="6" height="6" fill="#fff" stroke="#111"/><path d="M3 1V5M1 3H5" stroke="#c02020"/><path d="M13 11V15M11 13H15" stroke="#c02020"/></svg>
<div class="t" style="left:891px;top:30.2px;font-size:10.5px;color:#000;">Wireframe</div>
<div class="r" style="left:951px;top:28px;width:2px;height:16px;border-left:1px solid #b0b0b0;border-right:1px solid #fff"></div>
<svg style="left:960px;top:28px" width="16" height="17" viewBox="0 0 16 17"><rect x="0.5" y="0.5" width="6" height="5" fill="none" stroke="#b0b0b0"/><path d="M8 2L11 5M11 2.5V5H8.5" stroke="#b0b0b0" fill="none"/><rect x="8.5" y="8.5" width="6.5" height="6.5" fill="none" stroke="#b0b0b0"/><path d="M11.7 8.5V15M8.5 11.7H15" stroke="#b0b0b0"/></svg>
<div class="t" style="left:977.5px;top:30.2px;font-size:10.5px;color:#a8a8a8;">Show Mesh</div>
<svg style="left:1044px;top:28px" width="16" height="17" viewBox="0 0 16 17"><path d="M8 9L8 1" stroke="#20a040" stroke-width="1.6"/><path d="M8 9L1 14" stroke="#2040e0" stroke-width="1.6"/><path d="M8 9L15 14" stroke="#e02020" stroke-width="1.6"/><path d="M8 9V16" stroke="#999" stroke-width="1"/><path d="M5 5L8 1L11 5" fill="#20a040"/></svg>
<svg style="left:1070px;top:29px" width="12" height="13" viewBox="0 0 12 13"><rect x="0" y="0" width="4" height="4" fill="#e02020"/><rect x="4" y="0" width="4" height="4" fill="#30a030"/><rect x="8" y="0" width="4" height="4" fill="#2040d0"/><rect x="0" y="4" width="4" height="4" fill="#8020a0"/><rect x="4" y="4" width="4" height="4" fill="#f0a020"/><rect x="8" y="4" width="4" height="4" fill="#20a0a0"/><rect x="0" y="8" width="4" height="5" fill="#a02020"/><rect x="4" y="8" width="4" height="5" fill="#c06020"/><rect x="8" y="8" width="4" height="5" fill="#e08040"/></svg>
<div class="t" style="left:1085.6px;top:30.2px;font-size:10.5px;color:#000;">Random Colors</div>
<svg style="left:1171px;top:28px" width="15" height="16" viewBox="0 0 15 16"><path d="M1 5L10 1L14 10L5 14Z" fill="#fff" stroke="#3a5a8a" stroke-width="1.2"/><path d="M4 8L7 11L11 4" stroke="#10b010" stroke-width="1.8" fill="none"/></svg>
<div class="t" style="left:1188.4px;top:30.2px;font-size:10.5px;color:#000;">Annotation Preferences</div>
<div class="r" style="left:4px;top:50px;width:3px;height:16px;border-left:1px solid #fff;border-right:1.5px solid #c4c4c4"></div>
<svg style="left:14px;top:53px" width="13" height="11" viewBox="0 0 13 11"><rect x="0" y="0" width="13" height="11" fill="#f0f000"/><rect x="2" y="1" width="4" height="9" fill="#6a6a20"/><rect x="7" y="1" width="4" height="9" fill="#6a6a20"/></svg>
<div class="t" style="left:29.8px;top:52px;font-size:10.7px;color:#000;">Edge Coloring</div>
<svg style="left:104px;top:57px" width="7" height="4"><path d="M0 0H7L3.5 4Z" fill="#000"/></svg>
<svg style="left:119.3px;top:52px" width="15" height="15" viewBox="0 0 15 15"><path d="M1 13.5L10.5 1.5" stroke="#111" stroke-width="2.2" stroke-linecap="round"/><text x="8.5" y="14.5" font-family="Liberation Sans" font-size="7.5" fill="#222">0</text></svg>
<svg style="left:136.8px;top:57px" width="7" height="4"><path d="M0 0H7L3.5 4Z" fill="#000"/></svg>
<svg style="left:151.7px;top:52px" width="15" height="15" viewBox="0 0 15 15"><path d="M1 13.5L10.5 1.5" stroke="#111" stroke-width="2.2" stroke-linecap="round"/><text x="8.5" y="14.5" font-family="Liberation Sans" font-size="7.5" fill="#222">1</text></svg>
<svg style="left:169.2px;top:57px" width="7" height="4"><path d="M0 0H7L3.5 4Z" fill="#000"/></svg>
<svg style="left:185px;top:52px" width="15" height="15" viewBox="0 0 15 15"><path d="M1 13.5L10.5 1.5" stroke="#111" stroke-width="2.2" stroke-linecap="round"/><text x="8.5" y="14.5" font-family="Liberation Sans" font-size="7.5" fill="#222">2</text></svg>
<svg style="left:202.5px;top:57px" width="7" height="4"><path d="M0 0H7L3.5 4Z" fill="#000"/></svg>
<svg style="left:217.3px;top:52px" width="15" height="15" viewBox="0 0 15 15"><path d="M1 13.5L10.5 1.5" stroke="#111" stroke-width="2.2" stroke-linecap="round"/><text x="8.5" y="14.5" font-family="Liberation Sans" font-size="7.5" fill="#222">3</text></svg>
<svg style="left:234.8px;top:57px" width="7" height="4"><path d="M0 0H7L3.5 4Z" fill="#000"/></svg>
<svg style="left:250.6px;top:52px" width="15" height="15" viewBox="0 0 15 15"><path d="M1 13.5L10.5 1.5" stroke="#111" stroke-width="2.2" stroke-linecap="round"/><text x="8.5" y="14.5" font-family="Liberation Sans" font-size="7.5" fill="#222">x</text></svg>
<svg style="left:268.1px;top:57px" width="7" height="4"><path d="M0 0H7L3.5 4Z" fill="#000"/></svg>
<svg style="left:282px;top:52px" width="15" height="15" viewBox="0 0 15 15"><path d="M1 14L6 9" stroke="#111" stroke-width="2"/><path d="M5 6L11 1L14 4L9 10L7 11L4 8Z" fill="#111"/></svg>
<svg style="left:306px;top:52px" width="14" height="15" viewBox="0 0 14 15"><path d="M1.5 1V14M3.5 1V14" stroke="#c03030" stroke-width="1.2"/><path d="M5 7.5H9M7.5 5.5L9.5 7.5L7.5 9.5" stroke="#222" fill="none"/><path d="M11 1V14M13 1V14" stroke="#222" stroke-width="1.2"/></svg>
<svg style="left:331px;top:52px" width="15" height="15" viewBox="0 0 15 15"><path d="M1.5 1V14" stroke="#222" stroke-width="1"/><path d="M3 7.5H10M5 5.5L3 7.5L5 9.5M8 5.5L10 7.5L8 9.5" stroke="#222" fill="none"/><rect x="11" y="0.5" width="3.5" height="14" fill="#20a020"/></svg>
<div class="t" style="left:348.6px;top:52px;font-size:10.8px;color:#000;">Thicken Annotations</div>
<div class="r" style="left:4px;top:72px;width:3px;height:16px;border-left:1px solid #fff;border-right:1.5px solid #c4c4c4"></div>
<div class="t" style="left:9.1px;top:75.5px;font-size:10.7px;color:#000;">Result</div>
<div class="r" style="left:47px;top:74px;width:123px;height:16px;background:#fff"></div>
<div class="r" style="left:158px;top:74px;width:12px;height:16px;background:#f0f0f0"></div>
<div class="t" style="left:50.3px;top:76.2px;font-size:10.5px;color:#000;">0.8 (Auto Scale)</div>
<svg style="left:160.5px;top:81px" width="7" height="4"><path d="M0 0H7L3.5 4Z" fill="#000"/></svg>
<svg style="left:177px;top:73px" width="15" height="16" viewBox="0 0 15 16"><path d="M7.5 1L14 4V12L7.5 15L1 12V4Z" fill="#808080" stroke="#222"/><path d="M1 4L7.5 7L14 4M7.5 7V15" stroke="#222" fill="none"/><path d="M1 4L7.5 1L14 4L7.5 7Z" fill="#a8a8a8" stroke="#222"/></svg>
<svg style="left:196px;top:79px" width="7" height="4"><path d="M0 0H7L3.5 4Z" fill="#000"/></svg>
<svg style="left:212px;top:73px" width="11" height="16" viewBox="0 0 11 16"><rect x="0.5" y="0.5" width="10" height="15" fill="#000"/><rect x="2" y="2" width="7" height="2" fill="#e02020"/><rect x="2" y="5" width="7" height="2" fill="#f0d020"/><rect x="2" y="8" width="7" height="2" fill="#20c020"/><rect x="2" y="11" width="7" height="1.8" fill="#20c0e0"/><rect x="2" y="13.2" width="7" height="1.5" fill="#2040e0"/></svg>
<svg style="left:228.5px;top:79px" width="7" height="4"><path d="M0 0H7L3.5 4Z" fill="#000"/></svg>
<svg style="left:242px;top:72px" width="15" height="17" viewBox="0 0 15 17"><defs><linearGradient id="hx" x1="0" y1="0" x2="1" y2="1"><stop offset="0" stop-color="#2040e0"/><stop offset="0.35" stop-color="#20d0e0"/><stop offset="0.55" stop-color="#40d040"/><stop offset="0.75" stop-color="#f0e020"/><stop offset="1" stop-color="#e02020"/></linearGradient></defs><path d="M7.5 1L14.5 4.5V12.5L7.5 16L0.5 12.5V4.5Z" fill="url(#hx)"/></svg>
<svg style="left:261.6px;top:79px" width="7" height="4"><path d="M0 0H7L3.5 4Z" fill="#000"/></svg>
<svg style="left:276px;top:73px" width="15" height="15" viewBox="0 0 15 15"><path d="M1 3H12M1 7.5H12M1 12H12M10 1L13 3L10 5M10 5.5L13 7.5L10 9.5M10 10L13 12L10 14" stroke="#b8b8b8" fill="none"/></svg>
<div class="r" style="left:298px;top:73px;width:2px;height:16px;border-left:1px solid #b0b0b0;border-right:1px solid #fff"></div>
<svg style="left:307px;top:76px" width="16" height="10" viewBox="0 0 16 10"><path d="M0.5 0.5H12L15.5 5L12 9.5H0.5Z" fill="#fff" stroke="#333"/><text x="1.5" y="7.5" font-family="Liberation Mono" font-weight="bold" font-size="6" fill="#222">MAX</text></svg>
<svg style="left:331px;top:76px" width="16" height="10" viewBox="0 0 16 10"><path d="M0.5 0.5H12L15.5 5L12 9.5H0.5Z" fill="#fff" stroke="#333"/><text x="1.5" y="7.5" font-family="Liberation Mono" font-weight="bold" font-size="6" fill="#222">MIN</text></svg>
<div class="r" style="left:355px;top:73px;width:2px;height:16px;border-left:1px solid #b0b0b0;border-right:1px solid #fff"></div>
<svg style="left:363px;top:76px" width="16" height="10" viewBox="0 0 16 10"><path d="M0.5 0.5H12L15.5 5L12 9.5H0.5Z" fill="#fff" stroke="#333"/><text x="1.5" y="7.5" font-family="Liberation Mono" font-size="6.5" fill="#222">123</text></svg>
<div class="t" style="left:380.2px;top:74.5px;font-size:11px;color:#000;">Probe</div>
<div class="r" style="left:419px;top:73px;width:2px;height:16px;border-left:1px solid #b0b0b0;border-right:1px solid #fff"></div>
<div class="t" style="left:427px;top:73.5px;font-size:10.5px;color:#000;">Display</div>
<div class="r" style="left:475px;top:74px;width:103px;height:16px;background:#fff"></div>
<div class="r" style="left:566px;top:74px;width:12px;height:16px;background:#f0f0f0"></div>
<div class="t" style="left:477.3px;top:76.2px;font-size:10.3px;color:#000;">All Bodies</div>
<svg style="left:568.5px;top:81px" width="7" height="4"><path d="M0 0H7L3.5 4Z" fill="#000"/></svg>
<svg style="left:0;top:0" width="1313" height="782"><defs><clipPath id="c_front"><path d="M561.7,403.2 L607.8,402.2 L652.8,400.8 L697.6,399.2 L742.4,404.5 L789.0,413.0 L834.4,421.6 L883.7,428.2 L930.4,426.2 L930.4,450.0 L930.4,450.0 L883.7,444.7 L834.4,441.0 L789.0,437.4 L742.4,433.0 L697.6,429.3 L652.8,425.8 L607.8,422.0 L561.7,417.6 Z"/></clipPath><clipPath id="c_mid"><path d="M607.8,376.8 L652.8,379.0 L697.6,384.5 L742.4,392.8 L789.0,402.0 L834.4,411.0 L883.7,415.4 L930.4,424.6 L930.4,426.2 L883.7,428.2 L834.4,421.6 L789.0,413.0 L742.4,404.5 L697.6,399.2 L652.8,400.8 L607.8,402.2 Z"/></clipPath><clipPath id="c_top"><path d="M607.8,376.8 L612.5,374.4 L627.9,373.4 L659.5,354.3 L693.3,352.5 L730.0,355.0 L757.5,360.0 L780.0,373.0 L800.0,386.0 L820.0,395.0 L850.0,386.0 L884.0,384.0 L930.0,386.0 L978.0,383.3 L1023.5,387.3 L974.2,417.6 L930.4,424.6 L883.7,415.4 L834.4,411.0 L789.0,402.0 L742.4,392.8 L697.6,384.5 L652.8,379.0 L607.8,376.8 Z"/></clipPath><clipPath id="c_blade_top"><path d="M673.7,222.5 L668.0,233.0 L663.5,248.0 L661.4,262.0 L661.4,279.8 L664.0,288.0 L670.0,295.0 L682.6,301.4 L705.0,306.0 L731.4,314.4 L755.0,323.0 L777.0,334.2 L793.0,345.0 L807.6,355.5 L825.0,365.0 L840.0,370.7 L856.0,375.5 L872.0,392.0 L870.0,405.0 L835.5,400.0 L820.0,395.0 L799.7,386.5 L780.0,373.5 L757.5,359.0 L735.0,347.0 L710.2,334.7 L680.0,326.0 L654.8,318.8 L640.0,308.0 L632.0,292.0 L632.0,275.0 L636.0,255.0 L650.0,234.0 L672.6,221.5 Z"/></clipPath><clipPath id="c_blade_front"><path d="M654.8,318.8 L680.0,326.0 L710.2,334.7 L735.0,347.0 L757.5,359.0 L780.0,373.5 L799.7,386.5 L820.0,395.0 L835.5,400.0 L870.0,405.0 L870.0,414.0 L835.5,407.0 L799.7,390.0 L780.0,378.0 L757.5,366.0 L730.0,363.0 L700.0,355.0 L659.5,354.3 Z"/></clipPath></defs><g clip-path="url(#c_front)"><polygon points="450.0,520.0 450.0,380.0 710.0,224.0 867.8,228.3 607.8,376.5 607.8,520.0" fill="#0000a0" stroke="#0000a0" stroke-width="0.8"/><polygon points="607.8,520.0 607.8,376.5 867.8,228.3 912.8,230.3 652.8,378.5 652.8,520.0" fill="#0a4a78" stroke="#0a4a78" stroke-width="0.8"/><polygon points="652.8,520.0 652.8,378.5 912.8,230.3 958.0,247.8 698.0,383.0 698.0,520.0" fill="#0a6e78" stroke="#0a6e78" stroke-width="0.8"/><polygon points="698.0,520.0 698.0,383.0 958.0,247.8 1002.3,231.8 742.3,393.0 742.3,520.0" fill="#0a7a58" stroke="#0a7a58" stroke-width="0.8"/><polygon points="742.3,520.0 742.3,393.0 1002.3,231.8 1048.5,194.0 788.5,402.0 788.5,520.0" fill="#007a10" stroke="#007a10" stroke-width="0.8"/><polygon points="788.5,520.0 788.5,402.0 1048.5,194.0 1094.4,229.0 834.4,411.0 834.4,520.0" fill="#4a7800" stroke="#4a7800" stroke-width="0.8"/><polygon points="834.4,520.0 834.4,411.0 1094.4,229.0 1143.7,249.0 883.7,415.4 883.7,520.0" fill="#7a7000" stroke="#7a7000" stroke-width="0.8"/><polygon points="883.7,520.0 883.7,415.4 1143.7,249.0 1190.4,177.6 930.4,424.6 930.4,520.0" fill="#7a5000" stroke="#7a5000" stroke-width="0.8"/><polygon points="930.4,520.0 930.4,424.6 1190.4,177.6 1460.0,274.0 1200.0,430.0 1200.0,520.0" fill="#700000" stroke="#700000" stroke-width="0.8"/></g><g clip-path="url(#c_mid)"><polygon points="450.0,520.0 450.0,380.0 710.0,224.0 867.8,228.3 607.8,376.5 607.8,520.0" fill="#0000b0" stroke="#0000b0" stroke-width="0.8"/><polygon points="607.8,520.0 607.8,376.5 867.8,228.3 912.8,230.3 652.8,378.5 652.8,520.0" fill="#0a5a92" stroke="#0a5a92" stroke-width="0.8"/><polygon points="652.8,520.0 652.8,378.5 912.8,230.3 958.0,247.8 698.0,383.0 698.0,520.0" fill="#0a8a98" stroke="#0a8a98" stroke-width="0.8"/><polygon points="698.0,520.0 698.0,383.0 958.0,247.8 1002.3,231.8 742.3,393.0 742.3,520.0" fill="#0a9070" stroke="#0a9070" stroke-width="0.8"/><polygon points="742.3,520.0 742.3,393.0 1002.3,231.8 1048.5,194.0 788.5,402.0 788.5,520.0" fill="#009a10" stroke="#009a10" stroke-width="0.8"/><polygon points="788.5,520.0 788.5,402.0 1048.5,194.0 1094.4,229.0 834.4,411.0 834.4,520.0" fill="#5a9000" stroke="#5a9000" stroke-width="0.8"/><polygon points="834.4,520.0 834.4,411.0 1094.4,229.0 1143.7,249.0 883.7,415.4 883.7,520.0" fill="#9a9000" stroke="#9a9000" stroke-width="0.8"/><polygon points="883.7,520.0 883.7,415.4 1143.7,249.0 1190.4,177.6 930.4,424.6 930.4,520.0" fill="#9a6400" stroke="#9a6400" stroke-width="0.8"/><polygon points="930.4,520.0 930.4,424.6 1190.4,177.6 1460.0,274.0 1200.0,430.0 1200.0,520.0" fill="#a00000" stroke="#a00000" stroke-width="0.8"/></g><g clip-path="url(#c_top)"><polygon points="450.0,520.0 450.0,380.0 710.0,224.0 867.8,228.3 607.8,376.5 607.8,520.0" fill="#0000c4" stroke="#0000c4" stroke-width="0.8"/><polygon points="607.8,520.0 607.8,376.5 867.8,228.3 912.8,230.3 652.8,378.5 652.8,520.0" fill="#0a78b8" stroke="#0a78b8" stroke-width="0.8"/><polygon points="652.8,520.0 652.8,378.5 912.8,230.3 958.0,247.8 698.0,383.0 698.0,520.0" fill="#0ab0c0" stroke="#0ab0c0" stroke-width="0.8"/><polygon points="698.0,520.0 698.0,383.0 958.0,247.8 1002.3,231.8 742.3,393.0 742.3,520.0" fill="#0ab890" stroke="#0ab890" stroke-width="0.8"/><polygon points="742.3,520.0 742.3,393.0 1002.3,231.8 1048.5,194.0 788.5,402.0 788.5,520.0" fill="#00c000" stroke="#00c000" stroke-width="0.8"/><polygon points="788.5,520.0 788.5,402.0 1048.5,194.0 1094.4,229.0 834.4,411.0 834.4,520.0" fill="#88c000" stroke="#88c000" stroke-width="0.8"/><polygon points="834.4,520.0 834.4,411.0 1094.4,229.0 1143.7,249.0 883.7,415.4 883.7,520.0" fill="#c0b800" stroke="#c0b800" stroke-width="0.8"/><polygon points="883.7,520.0 883.7,415.4 1143.7,249.0 1190.4,177.6 930.4,424.6 930.4,520.0" fill="#c08000" stroke="#c08000" stroke-width="0.8"/><polygon points="930.4,520.0 930.4,424.6 1190.4,177.6 1460.0,274.0 1200.0,430.0 1200.0,520.0" fill="#c40000" stroke="#c40000" stroke-width="0.8"/></g><defs><linearGradient id="hl1" x1="0" x2="1"><stop offset="0" stop-color="#fff" stop-opacity="0"/><stop offset="0.25" stop-color="#fff" stop-opacity="0.12"/><stop offset="0.6" stop-color="#fff" stop-opacity="0"/></linearGradient></defs><polygon points="607.8,376.8 652.8,379.0 652.8,400.8 607.8,402.2" fill="url(#hl1)" /><path d="M561.7,380.2 L612.5,350.4 L620.2,346.6 L658.6,346.6 L659.5,354 L640,362 L612.5,374.4 L607.8,376.8 L607.8,402.2 L561.7,403.2 Z" fill="#0000c0" /><polygon points="561.7,380.2 607.8,376.8 607.8,402.2 561.7,403.2" fill="#0000a8" /><path d="M562.7,383 C572,377 584,372 590,372 L590,403 L562.7,403.2 Z" fill="#0000e0" /><path d="M588,368 C596,364 606,366 612,370 L607.8,377 L607.8,403 L590,404 Z" fill="#000070" /><path d="M587,369 C592,366 600,364 606,365 L612,369 C604,369 595,370 588,372 Z" fill="#0000b0" /><polygon points="616.4,368.7 645.2,350.4 659.5,348.5 631.0,366.0 616.4,368.7" fill="#0a78b8" /><polygon points="616.4,368.7 631.0,366.0 659.5,348.5 659.5,354.3 627.9,373.4 616.4,373.4" fill="#0a5a90" /><polygon points="974.2,417.6 1023.5,387.3 1023.5,425.2 974.2,453.8" fill="#c00000" /><polygon points="930.4,424.6 947.0,398.0 965.0,389.5 994.4,382.6 998.3,385.8 1023.5,387.3 974.2,417.6" fill="#c80000" /><polygon points="930.4,424.6 974.2,417.6 974.2,453.8 930.4,450.0" fill="#700000" /><polygon points="953.0,397.0 962.0,392.0 962.0,404.0 953.0,409.0" fill="#a80000" /><polygon points="962.0,392.0 994.4,382.6 994.4,386.0 962.0,396.0" fill="#b40000" /><polygon points="994.4,382.6 998.3,385.8 998.3,392.0 994.4,390.0" fill="#900000" /><defs><linearGradient id="org" x1="0" x2="1"><stop offset="0" stop-color="#b87400"/><stop offset="0.7" stop-color="#d49400"/><stop offset="1" stop-color="#c08000"/></linearGradient></defs><path d="M884,414.6 L912.4,396 L971.8,385 L947,398 L939,405.3 Z" fill="#c08000" /><path d="M884,414.6 C900,410 920,406 939,405.3 C942,406 943,408 941,411 L931.2,425.6 L884,428.7 Z" fill="url(#org)" /><path d="M884,414.6 C900,410 920,406 939,405.3 L936,404 C920,404 900,407 884,411 Z" fill="#d89a10" /><path d="M663.4,218.4 C645,228 628,250 621.5,275 C617,300 628,322 654.8,331 L659.5,347.5 L654.8,318.8 C640,308 632,292 632,275 C634,252 650,232 672.6,221.5 Z" fill="#044e70" /><circle cx="626" cy="297" r="0.8" fill="#3a8ab0"/><circle cx="637" cy="314" r="0.8" fill="#3a8ab0"/><circle cx="645" cy="320" r="0.8" fill="#3a8ab0"/><g clip-path="url(#c_blade_top)"><polygon points="300.0,0.0 1100.0,0.0 1100.0,29.4 455.0,448.7 300.0,448.7" fill="#0a90d4" stroke="#0a90d4" stroke-width="0.8"/><polygon points="805.0,221.2 860.5,233.0 560.5,437.0 505.0,416.2" fill="#0ac0c8" stroke="#0ac0c8" stroke-width="0.8"/><polygon points="860.5,233.0 907.7,254.8 607.7,461.8 560.5,437.0" fill="#0ad098" stroke="#0ad098" stroke-width="0.8"/><polygon points="907.7,254.8 948.5,278.4 648.5,494.4 607.7,461.8" fill="#00d800" stroke="#00d800" stroke-width="0.8"/><polygon points="948.5,278.4 990.0,294.0 690.0,510.0 648.5,494.4" fill="#98d000" stroke="#98d000" stroke-width="0.8"/><polygon points="990.0,294.0 1050.0,312.0 750.0,528.0 690.0,510.0" fill="#c8c400" stroke="#c8c400" stroke-width="0.8"/><polygon points="1050.0,312.0 1250.0,395.0 950.0,605.0 750.0,528.0" fill="#c88a00" stroke="#c88a00" stroke-width="0.8"/></g><defs><linearGradient id="bl_g" x1="0" y1="0" x2="1" y2="0.3"><stop offset="0" stop-color="#fff" stop-opacity="0.1"/><stop offset="0.5" stop-color="#fff" stop-opacity="0"/><stop offset="1" stop-color="#000" stop-opacity="0.08"/></linearGradient></defs><path d="M654.8,318.8 L640.0,308.0 L632.0,292.0 L632.0,275.0 L636.0,255.0 L650.0,234.0 L672.6,221.5 L673.7,222.5 L668.0,233.0 L663.5,248.0 L661.4,262.0 L661.4,279.8 L664.0,288.0 L670.0,295.0 L682.6,301.4 Z" fill="url(#bl_g)" /><g clip-path="url(#c_blade_front)"><polygon points="300.0,0.0 1100.0,0.0 1100.0,29.4 455.0,448.7 300.0,448.7" fill="#0a7a80" stroke="#0a7a80" stroke-width="0.8"/><polygon points="805.0,221.2 860.5,233.0 560.5,437.0 505.0,416.2" fill="#0a7a80" stroke="#0a7a80" stroke-width="0.8"/><polygon points="860.5,233.0 907.7,254.8 607.7,461.8 560.5,437.0" fill="#0a7860" stroke="#0a7860" stroke-width="0.8"/><polygon points="907.7,254.8 948.5,278.4 648.5,494.4 607.7,461.8" fill="#008010" stroke="#008010" stroke-width="0.8"/><polygon points="948.5,278.4 990.0,294.0 690.0,510.0 648.5,494.4" fill="#4a7a00" stroke="#4a7a00" stroke-width="0.8"/><polygon points="990.0,294.0 1050.0,312.0 750.0,528.0 690.0,510.0" fill="#7a7000" stroke="#7a7000" stroke-width="0.8"/><polygon points="1050.0,312.0 1250.0,395.0 950.0,605.0 750.0,528.0" fill="#7a7000" stroke="#7a7000" stroke-width="0.8"/></g><path d="M688.7,319 C720,325 755,338 775,352 C795,366 815,380 835.5,390" fill="none" stroke="rgba(0,40,30,0.6)" stroke-width="1.8"/><path d="M852,378 C852,372 858,370 868,370 L896,371 C904,373 906,378 906,386 L905,402 L886,405 L886,398 C886,390 880,385 870,385 Z" fill="#c4bc00" /><path d="M893,371 C901,373 906,378 906,386 L906,400 L899,401 L899,386 C899,379 896,375 890,373 Z" fill="#e0dc10" /><path d="M836,391 C836,385 842,383 850,383 L873,383 C882,385 886,391 886,398 L886,412 L838,412 Z" fill="#b8b000" /><path d="M872,383 C881,385 886,391 886,398 L886,412 L877,412 L877,398 C877,391 874,387 866,385 Z" fill="#e4e010" /><path d="M836,391 C836,386 840,384 846,383 L846,392 L838,411 Z" fill="#9ab000" /><polygon points="836.0,411.0 886.0,412.0 886.0,428.0 834.4,421.6" fill="#7a7000" /><path d="M670.5,128.4 L683.1,124.2 L742.2,129.8 L734,136 L733.8,148 L716.9,203 L716.2,204.4 L684.5,221.3 L663.4,221.3 Z" fill="#0a68a2" /><path d="M670.5,128.4 L683.8,141 L681.7,210 L674.7,212.8 L663.4,221.3 Z" fill="#0a72b0" /><path d="M670.5,128.4 L672,129 L664.8,221 L663.4,221.3 Z" fill="#085a88" /><path d="M683.8,141 L687.3,145.3 L685.5,208.5 L681.7,210 Z" fill="#1a8ccc" /><path d="M687.3,145.3 L733,134 L715.5,196 L690,210 L685.5,208.5 Z" fill="#0a6aa4" /><path d="M733,134 L733.8,148 L716.9,203 L715.5,196 Z" fill="#0a78b6" /><path d="M712,146 L733,134 L715.5,196 L692,209 Z" fill="#0a5c96" /><path d="M712,146 L718,144 L694,209 L690,210 Z" fill="#0a74b0" /><path d="M674.7,212.8 L715.5,196 L716.2,204.4 L684.5,221.3 L674.7,221.3 Z" fill="#0a82c2" /><path d="M674.7,212.8 L690,210 L715.5,196 L716,198 L690,213 L676,215 Z" fill="#1a90d0" /><path d="M670.5,128.4 L683.1,124.2 L742.2,129.8 L712.7,139.7 Z" fill="#0a80c0" /><path d="M670.5,128.4 L712.7,139.7 L742.2,129.8 L742,133 L712,146 L687.3,145.3 L683.8,141 Z" fill="#0a5a8c" /><path d="M683.8,141 L712.7,139.7 L712,146 L687.3,145.3 Z" fill="#0a70ac" /><path d="M678.3,117.3 C690,112 700,110 712,110 C730,111 743,115 743.6,120.8 L743,125 C738,129 725,132 712,131 C695,130 680,125 678.3,123 Z" fill="#0a82c2" /><path d="M678.3,123 C680,125 695,130 712,131 C725,132 738,129 743,125 L742,129 C735,133 722,135 710,134 C695,133 682,130 678.3,128 Z" fill="#0a5a8e" /><path d="M693.5,117 C695,110 703,106 712,106 C722,106 729,110 729.2,117 C725,122 700,122 693.5,117 Z" fill="#0a78b8" /><path d="M712,106 C722,106 729,110 729.2,117 C725,120 718,121 712,121 Z" fill="#0a8aca" /><path d="M704.2,99 C706,97 720,97 722.1,99 L722.1,109 C718,111 708,111 704.2,109 Z" fill="#0a6ca8" /><path d="M704.2,99 C706,96 720,96 722.1,99 C720,101 706,101 704.2,99 Z" fill="#0a88c8" /></svg>
<div class="t" style="left:324.9px;top:109.5px;font-size:10.5px;color:#000;font-weight:bold;-webkit-text-stroke:0.1px currentColor;">B: Transient Structural</div>
<div class="t" style="left:324.9px;top:124.41999999999999px;font-size:11px;color:#111;">Directional Deformation</div>
<div class="t" style="left:324.9px;top:139.302px;font-size:10.85px;color:#111;">Type: Directional Deformation(Y Axis)</div>
<div class="t" style="left:324.9px;top:154.096px;font-size:10.8px;color:#111;">Unit: m</div>
<div class="t" style="left:324.9px;top:168.97799999999998px;font-size:10.65px;color:#111;">Global Coordinate System</div>
<div class="t" style="left:324.9px;top:183.596px;font-size:10.8px;color:#111;">Time: 0.72</div>
<div class="t" style="left:324.9px;top:198.786px;font-size:10.3px;color:#111;">21/04/2014 19:33</div>
<div class="r" style="left:325px;top:233.5px;width:16px;height:152px;background:#000;border-radius:1px"></div>
<div class="r" style="left:326.3px;top:235.29999999999998px;width:13.4px;height:15.3px;background:#ff0000"></div>
<div class="r" style="left:326.3px;top:251.98px;width:13.4px;height:15.3px;background:#ffaa00"></div>
<div class="r" style="left:326.3px;top:268.66px;width:13.4px;height:15.3px;background:#ffff00"></div>
<div class="r" style="left:326.3px;top:285.34000000000003px;width:13.4px;height:15.3px;background:#aaff00"></div>
<div class="r" style="left:326.3px;top:302.02px;width:13.4px;height:15.3px;background:#00ff00"></div>
<div class="r" style="left:326.3px;top:318.70000000000005px;width:13.4px;height:15.3px;background:#00ffaa"></div>
<div class="r" style="left:326.3px;top:335.38px;width:13.4px;height:15.3px;background:#00ffff"></div>
<div class="r" style="left:326.3px;top:352.06px;width:13.4px;height:15.3px;background:#00aaff"></div>
<div class="r" style="left:326.3px;top:368.74px;width:13.4px;height:15.3px;background:#0000ff"></div>
<div class="t" style="left:348.6px;top:228.8px;font-size:11.1px;color:#000;font-weight:bold;-webkit-text-stroke:0.1px currentColor;">0.01871 Max</div>
<div class="t" style="left:348.8px;top:244.66000000000003px;font-size:11.4px;color:#111;transform:scaleX(0.835);transform-origin:0 0;-webkit-text-stroke:0.3px #111">0.016125</div>
<div class="t" style="left:348.8px;top:261.12px;font-size:11.4px;color:#111;transform:scaleX(0.835);transform-origin:0 0;-webkit-text-stroke:0.3px #111">0.013539</div>
<div class="t" style="left:348.8px;top:277.58px;font-size:11.4px;color:#111;transform:scaleX(0.835);transform-origin:0 0;-webkit-text-stroke:0.3px #111">0.010954</div>
<div class="t" style="left:348.8px;top:294.03999999999996px;font-size:11.4px;color:#111;transform:scaleX(0.835);transform-origin:0 0;-webkit-text-stroke:0.3px #111">0.0083684</div>
<div class="t" style="left:348.8px;top:310.5px;font-size:11.4px;color:#111;transform:scaleX(0.835);transform-origin:0 0;-webkit-text-stroke:0.3px #111">0.0057829</div>
<div class="t" style="left:348.8px;top:326.96px;font-size:11.4px;color:#111;transform:scaleX(0.835);transform-origin:0 0;-webkit-text-stroke:0.3px #111">0.0031974</div>
<div class="t" style="left:348.8px;top:343.41999999999996px;font-size:11.4px;color:#111;transform:scaleX(0.835);transform-origin:0 0;-webkit-text-stroke:0.3px #111">0.00061192</div>
<div class="t" style="left:348.8px;top:359.88px;font-size:11.4px;color:#111;transform:scaleX(0.835);transform-origin:0 0;-webkit-text-stroke:0.3px #111">-0.0019736</div>
<div class="t" style="left:348.6px;top:376.94000000000005px;font-size:11.1px;color:#000;font-weight:bold;-webkit-text-stroke:0.1px currentColor;">-0.004559 Min</div>
<div class="t" style="left:1209.2px;top:102.5px;font-size:25.5px;color:#fff;font-weight:bold;-webkit-text-stroke:0.1px currentColor;transform:scaleX(0.86);transform-origin:0 0;letter-spacing:0.3px">ANSYS</div>
<div class="t" style="left:1248.5px;top:129px;font-size:14.5px;color:#fff;transform:scaleX(0.92);transform-origin:0 0">R15.0</div>
<div class="r" style="left:1207px;top:152.5px;width:80px;height:2px;background:linear-gradient(90deg,rgba(255,255,255,0),rgba(255,255,255,0.9) 50%,rgba(255,255,255,0))"></div>
<div class="r" style="left:1207px;top:171px;width:80px;height:2px;background:linear-gradient(90deg,rgba(255,255,255,0),rgba(255,255,255,0.9) 50%,rgba(255,255,255,0))"></div>
<div class="t" style="left:1218px;top:154.5px;font-size:14.5px;color:#fff;transform:scaleX(0.87);transform-origin:0 0">Academic</div>
<div class="t" style="left:704px;top:465px;font-size:10.5px;color:#111;transform:scaleX(0.86);transform-origin:0 0">0.000</div>
<div class="t" style="left:797px;top:465px;font-size:10.5px;color:#111;transform:scaleX(0.86);transform-origin:0 0">0.050</div>
<div class="t" style="left:892px;top:465px;font-size:10.5px;color:#111;transform:scaleX(0.86);transform-origin:0 0">0.100 (m)</div>
<div class="r" style="left:716px;top:477px;width:188px;height:9px;background:#fff;border:1px solid #000"></div>
<div class="r" style="left:716px;top:477px;width:47px;height:9px;background:#000"></div>
<div class="r" style="left:810px;top:477px;width:47px;height:9px;background:#000"></div>
<div class="t" style="left:751.4px;top:487.5px;font-size:10.5px;color:#111;transform:scaleX(0.86);transform-origin:0 0">0.025</div>
<div class="t" style="left:845.4px;top:487.5px;font-size:10.5px;color:#111;transform:scaleX(0.86);transform-origin:0 0">0.075</div>
<svg style="left:1210px;top:372px" width="100" height="95" viewBox="0 0 100 95"><defs><radialGradient id="bz" cx="0.35" cy="0.35" r="0.7"><stop offset="0" stop-color="#4040ff"/><stop offset="1" stop-color="#0000a0"/></radialGradient><radialGradient id="bc" cx="0.35" cy="0.35" r="0.7"><stop offset="0" stop-color="#80ffff"/><stop offset="1" stop-color="#10a0b0"/></radialGradient></defs><path d="M25.2 73.6L28.6 35" stroke="#107010" stroke-width="3"/><path d="M29 21.9L22.9 35.3H34Z" fill="#108010"/><path d="M25.2 73.6L63 79" stroke="#c00000" stroke-width="3"/><path d="M75.3 82.7L62.5 75.6L60.8 86.4Z" fill="#d00000"/><path d="M25.2 73.6L12 80" stroke="#0000c0" stroke-width="3"/><circle cx="10.8" cy="81.7" r="4.6" fill="url(#bz)"/><text x="5" y="87" font-family="Liberation Sans" font-size="8" fill="#2020ff">Z</text><circle cx="42.4" cy="58.8" r="4.8" fill="url(#bc)"/><text x="29" y="13" font-family="Liberation Sans" font-size="11" fill="#30b030">Y</text><text x="81" y="84.5" font-family="Liberation Sans" font-size="11" fill="#ff4040">X</text></svg>
<div class="r" style="left:0px;top:483px;width:2px;height:273px;background:#3a3a3a"></div>
<div class="r" style="left:2px;top:483px;width:286px;height:273px;background:#fff"></div>
<div class="r" style="left:15.5px;top:483.4px;width:272px;height:16.65px;background:#fff"></div>
<div class="r" style="left:4.5px;top:487.9px;width:9px;height:9px;background:#fff;border:1px solid #a8a8a8"></div>
<div class="r" style="left:6.5px;top:491.9px;width:5px;height:1px;background:#222"></div>
<div class="t" style="left:18.3px;top:486.29999999999995px;font-size:10.1px;color:#000;font-weight:bold;-webkit-text-stroke:0.1px currentColor;">Scope</div>
<div class="r" style="left:15.5px;top:499.04999999999995px;width:272px;height:1.2px;background:#c4c4c4"></div>
<div class="r" style="left:124.3px;top:500.04999999999995px;width:163px;height:16.65px;background:#e9e7e3"></div>
<div class="t" style="left:18.3px;top:502.15px;font-size:10.7px;color:#111;">Scoping Method</div>
<div class="t" style="left:127.4px;top:503.74999999999994px;font-size:10.25px;color:#111;">Geometry Selection</div>
<div class="r" style="left:15.5px;top:515.6999999999999px;width:272px;height:1.2px;background:#c4c4c4"></div>
<div class="r" style="left:124.3px;top:516.6999999999999px;width:163px;height:16.65px;background:#e9e7e3"></div>
<div class="t" style="left:18.3px;top:518.8px;font-size:10.7px;color:#111;">Geometry</div>
<div class="t" style="left:127.4px;top:520.4px;font-size:10.25px;color:#111;">All Bodies</div>
<div class="r" style="left:15.5px;top:532.3499999999999px;width:272px;height:1.2px;background:#c4c4c4"></div>
<div class="r" style="left:15.5px;top:533.35px;width:272px;height:16.65px;background:#fff"></div>
<div class="r" style="left:4.5px;top:537.85px;width:9px;height:9px;background:#fff;border:1px solid #a8a8a8"></div>
<div class="r" style="left:6.5px;top:541.85px;width:5px;height:1px;background:#222"></div>
<div class="t" style="left:18.3px;top:536.25px;font-size:10.1px;color:#000;font-weight:bold;-webkit-text-stroke:0.1px currentColor;">Definition</div>
<div class="r" style="left:15.5px;top:549.0px;width:272px;height:1.2px;background:#c4c4c4"></div>
<div class="r" style="left:124.3px;top:550.0px;width:163px;height:16.65px;background:#fff"></div>
<div class="t" style="left:18.3px;top:552.1px;font-size:10.7px;color:#111;">Type</div>
<div class="t" style="left:127.4px;top:553.7px;font-size:10.25px;color:#111;">Directional Deformation</div>
<div class="r" style="left:15.5px;top:565.65px;width:272px;height:1.2px;background:#c4c4c4"></div>
<div class="r" style="left:124.3px;top:566.65px;width:163px;height:16.65px;background:#fff"></div>
<div class="t" style="left:18.3px;top:568.75px;font-size:10.7px;color:#111;">Orientation</div>
<div class="t" style="left:127.4px;top:570.35px;font-size:10.25px;color:#111;">Y Axis</div>
<div class="r" style="left:15.5px;top:582.3px;width:272px;height:1.2px;background:#c4c4c4"></div>
<div class="r" style="left:124.3px;top:583.3px;width:163px;height:16.65px;background:#fff"></div>
<div class="t" style="left:18.3px;top:585.4px;font-size:10.7px;color:#111;">By</div>
<div class="t" style="left:127.4px;top:587.0px;font-size:10.25px;color:#111;">Time</div>
<div class="r" style="left:15.5px;top:598.9499999999999px;width:272px;height:1.2px;background:#c4c4c4"></div>
<div class="r" style="left:124.3px;top:599.9499999999999px;width:163px;height:16.65px;background:#fff"></div>
<div class="r" style="left:18.5px;top:603.4499999999999px;width:10px;height:10px;background:#fff;border:1px solid #c0c0c0"></div>
<div class="t" style="left:33px;top:602.05px;font-size:10.7px;color:#111;">Display Time</div>
<div class="t" style="left:127.4px;top:603.65px;font-size:10.25px;color:#111;">Last</div>
<div class="r" style="left:15.5px;top:615.5999999999999px;width:272px;height:1.2px;background:#c4c4c4"></div>
<div class="r" style="left:124.3px;top:616.5999999999999px;width:163px;height:16.65px;background:#fff"></div>
<div class="t" style="left:18.3px;top:618.6999999999999px;font-size:10.7px;color:#111;">Coordinate System</div>
<div class="t" style="left:127.4px;top:620.3px;font-size:10.25px;color:#111;">Global Coordinate System</div>
<div class="r" style="left:15.5px;top:632.2499999999999px;width:272px;height:1.2px;background:#c4c4c4"></div>
<div class="r" style="left:124.3px;top:633.25px;width:163px;height:16.65px;background:#fff"></div>
<div class="t" style="left:18.3px;top:635.35px;font-size:10.4px;color:#111;">Calculate Time History</div>
<div class="t" style="left:127.4px;top:636.95px;font-size:10.25px;color:#111;">Yes</div>
<div class="r" style="left:15.5px;top:648.9px;width:272px;height:1.2px;background:#c4c4c4"></div>
<div class="r" style="left:124.3px;top:649.9px;width:163px;height:16.65px;background:#e9e7e3"></div>
<div class="t" style="left:18.3px;top:652.0px;font-size:10.7px;color:#111;">Identifier</div>
<div class="r" style="left:15.5px;top:665.55px;width:272px;height:1.2px;background:#c4c4c4"></div>
<div class="r" style="left:124.3px;top:666.55px;width:163px;height:16.65px;background:#fff"></div>
<div class="t" style="left:18.3px;top:668.65px;font-size:10.7px;color:#111;">Suppressed</div>
<div class="t" style="left:127.4px;top:670.25px;font-size:10.25px;color:#111;">No</div>
<div class="r" style="left:15.5px;top:682.1999999999999px;width:272px;height:1.2px;background:#c4c4c4"></div>
<div class="r" style="left:15.5px;top:683.1999999999999px;width:272px;height:16.65px;background:#fff"></div>
<div class="r" style="left:4.5px;top:687.6999999999999px;width:9px;height:9px;background:#fff;border:1px solid #a8a8a8"></div>
<div class="r" style="left:6.5px;top:691.6999999999999px;width:5px;height:1px;background:#222"></div>
<div class="t" style="left:18.3px;top:686.0999999999999px;font-size:10.1px;color:#000;font-weight:bold;-webkit-text-stroke:0.1px currentColor;">Results</div>
<div class="r" style="left:15.5px;top:698.8499999999999px;width:272px;height:1.2px;background:#c4c4c4"></div>
<div class="r" style="left:124.3px;top:699.8499999999999px;width:163px;height:16.65px;background:#e9e7e3"></div>
<div class="r" style="left:18.5px;top:703.3499999999999px;width:10px;height:10px;background:#fff;border:1px solid #c0c0c0"></div>
<div class="t" style="left:33px;top:701.9499999999999px;font-size:10.7px;color:#111;">Minimum</div>
<div class="t" style="left:127.4px;top:703.55px;font-size:10.25px;color:#111;">-4.559e-003 m</div>
<div class="r" style="left:15.5px;top:715.4999999999999px;width:272px;height:1.2px;background:#c4c4c4"></div>
<div class="r" style="left:124.3px;top:716.5px;width:163px;height:16.65px;background:#e9e7e3"></div>
<div class="r" style="left:18.5px;top:720.0px;width:10px;height:10px;background:#fff;border:1px solid #c0c0c0"></div>
<div class="t" style="left:33px;top:718.6px;font-size:10.7px;color:#111;">Maximum</div>
<div class="t" style="left:127.4px;top:720.2px;font-size:10.25px;color:#111;">1.871e-002 m</div>
<div class="r" style="left:15.5px;top:732.15px;width:272px;height:1.2px;background:#c4c4c4"></div>
<div class="r" style="left:124.3px;top:733.15px;width:163px;height:16.65px;background:#e9e7e3"></div>
<div class="t" style="left:18.3px;top:735.25px;font-size:10.7px;color:#111;">Minimum Occurs On</div>
<div class="t" style="left:127.4px;top:736.85px;font-size:10.25px;color:#111;">Part 1</div>
<div class="r" style="left:15.5px;top:748.8px;width:272px;height:1.2px;background:#c4c4c4"></div>
<div class="r" style="left:124.3px;top:749.8px;width:163px;height:16.65px;background:#e9e7e3"></div>
<div class="t" style="left:18.3px;top:751.9px;font-size:10.7px;color:#111;"></div>
<div class="r" style="left:15.5px;top:765.4499999999999px;width:272px;height:1.2px;background:#c4c4c4"></div>
<div class="r" style="left:15px;top:483px;width:1px;height:273px;background:#c4c4c4"></div>
<div class="r" style="left:123.8px;top:483px;width:1.2px;height:273px;background:#c4c4c4"></div>
<div class="r" style="left:123.5px;top:483.4px;width:163.5px;height:15.649999999999999px;background:#fff"></div>
<div class="r" style="left:123.5px;top:533.35px;width:163.5px;height:15.649999999999999px;background:#fff"></div>
<div class="r" style="left:123.5px;top:683.1999999999999px;width:163.5px;height:15.649999999999999px;background:#fff"></div>
<div class="r" style="left:287px;top:483px;width:1px;height:273px;background:#a8a8a8"></div>
<div class="r" style="left:288px;top:483px;width:16px;height:273px;background:#f0f0f0"></div>
<svg style="left:291px;top:489px" width="10" height="6"><path d="M0.5 5L4.5 1L8.5 5Z" fill="#333"/></svg>
<svg style="left:291px;top:744px" width="10" height="6"><path d="M0.5 1L4.5 5L8.5 1Z" fill="#333"/></svg>
<div class="r" style="left:290px;top:501px;width:12px;height:157px;background:linear-gradient(90deg,#e8e8e8,#f4f4f4 40%,#d0d0d0);border:1px solid #b8b8b8;border-radius:2px"></div>
<svg style="left:292px;top:575px" width="8" height="6"><path d="M0 0.5H7M0 2.5H7M0 4.5H7" stroke="#777"/></svg>
<div class="r" style="left:304px;top:483px;width:5px;height:273px;background:#f8f8f8"></div>
<svg style="left:310px;top:514px" width="240" height="17" viewBox="0 0 240 17"><path d="M1.4 1.3L6.9 16" stroke="#000" stroke-width="1.1"/><path d="M64.5 16L70 1.7H136.7L142.2 16" fill="none" stroke="#000" stroke-width="1.1"/><path d="M139.4 16L144 1.7M219 16L225.3 1.7" fill="none" stroke="#000" stroke-width="1.1"/></svg>
<div class="t" style="left:319.8px;top:517.5px;font-size:10.7px;color:#000;font-weight:bold;-webkit-text-stroke:0.1px currentColor;">Geometry</div>
<div class="t" style="left:382.9px;top:517.5px;font-size:10.6px;color:#000;">Print Preview</div>
<div class="t" style="left:456px;top:517.5px;font-size:10.5px;color:#000;">Report Preview</div>
<div class="r" style="left:309px;top:556px;width:1.4px;height:180px;background:#404040"></div>
<div class="r" style="left:313px;top:561px;width:3px;height:15px;border-left:1px solid #fff;border-right:1.5px solid #c4c4c4"></div>
<div class="t" style="left:318.9px;top:562.2px;font-size:11.2px;color:#000;">Animation</div>
<svg style="left:377px;top:562px" width="16" height="15" viewBox="0 0 16 15"><path d="M0.5 0.5L15 7.5L0.5 14.5Z" fill="#b00010"/></svg>
<div class="r" style="left:396px;top:558px;width:19px;height:21px;border:1px solid #d0d0d0;background:#f6f6f6"></div>
<div class="r" style="left:399.5px;top:561.5px;width:12px;height:13px;background:#b00010;border:1px solid #700000"></div>
<div class="r" style="left:420px;top:561px;width:2px;height:15px;border-left:1px solid #b0b0b0;border-right:1px solid #fff"></div>
<div class="r" style="left:424px;top:558px;width:19px;height:21px;border:1px solid #d0d0d0;background:#f6f6f6"></div>
<svg style="left:426px;top:561px" width="16" height="15" viewBox="0 0 16 15"><path d="M1.5 1V11M5 1V11M8.5 1V11M12 1V11M1 1H12.5M1 11H12.5" stroke="#20a020" fill="none"/><path d="M1 13.5H4M5.5 13.5H8.5M11 13.5H13" stroke="#c00000" stroke-width="1.4"/></svg>
<svg style="left:448px;top:561px" width="16" height="15" viewBox="0 0 16 15"><path d="M1.5 1V11M5 1V11M8.5 1V11M12 1V11M1 1H12.5M1 11H12.5" stroke="#2040c0" fill="none"/><path d="M1 13.5H4M5.5 13.5H8.5M11 13.5H13" stroke="#c00000" stroke-width="1.4"/></svg>
<div class="r" style="left:471px;top:561px;width:2px;height:15px;border-left:1px solid #b0b0b0;border-right:1px solid #fff"></div>
<svg style="left:480px;top:560px" width="12" height="17" viewBox="0 0 12 17"><circle cx="6" cy="6" r="5.3" fill="#f8f040" stroke="#555" stroke-width="0.9"/><rect x="3.5" y="11" width="5" height="4.5" fill="#333"/></svg>
<div class="r" style="left:501px;top:559.6px;width:125px;height:18.2px;background:#fff;border:1px solid;border-color:#a0a0a0 #fff #fff #a0a0a0;box-shadow:inset 1px 1px 0 #e0e0e0"></div>
<div class="r" style="left:611px;top:561px;width:14px;height:15px;background:#f0f0f0;border:1px solid;border-color:#fff #808080 #808080 #fff"></div>
<svg style="left:614.5px;top:567px" width="7" height="4"><path d="M0 0H7L3.5 4Z" fill="#000"/></svg>
<div class="t" style="left:505.6px;top:563px;font-size:9.9px;color:#000;">10 Frames</div>
<div class="r" style="left:633.5px;top:559.6px;width:123px;height:18.2px;background:#fff"></div>
<div class="r" style="left:744px;top:561px;width:12px;height:15px;background:#f0f0f0"></div>
<svg style="left:746.5px;top:567px" width="7" height="4"><path d="M0 0H7L3.5 4Z" fill="#000"/></svg>
<div class="t" style="left:637.2px;top:563px;font-size:9.9px;color:#000;">2 Sec (Auto)</div>
<div class="r" style="left:762px;top:561px;width:2px;height:15px;border-left:1px solid #b0b0b0;border-right:1px solid #fff"></div>
<svg style="left:770px;top:560px" width="16" height="17" viewBox="0 0 16 17"><path d="M1 1.5H10M5.5 1.5V14M1 14H10" stroke="#555" fill="none"/><path d="M2 4H9" stroke="#888"/><rect x="8" y="8" width="8" height="8" fill="#2050b0"/><rect x="10" y="9" width="4" height="2.5" fill="#fff"/><rect x="10" y="13" width="4" height="3" fill="#a0c0f0"/></svg>
<div class="r" style="left:791px;top:561px;width:2px;height:15px;border-left:1px solid #b0b0b0;border-right:1px solid #fff"></div>
<svg style="left:799px;top:560px" width="16" height="17" viewBox="0 0 16 17"><circle cx="6.5" cy="6.5" r="5.5" fill="#fff" stroke="#222" stroke-width="1.3"/><path d="M4.5 3.5L9.5 6.5L4.5 9.5Z" fill="#c00010"/><path d="M10.5 10.5L15 15" stroke="#222" stroke-width="2.2"/></svg>
<div class="r" style="left:820px;top:561px;width:2px;height:15px;border-left:1px solid #b0b0b0;border-right:1px solid #fff"></div>
<svg style="left:828px;top:560px" width="17" height="17" viewBox="0 0 17 17"><rect x="0" y="0" width="17" height="17" fill="#e8e8e8"/><path d="M2 2V15M2 15H16M5 3V14M8 6V13M11 8V12M14 9V11" stroke="#a8a8a8" fill="none"/></svg>
<div class="t" style="left:853.8px;top:563px;font-size:9.5px;color:#808080;">3 Cycles</div>
<div class="r" style="left:996px;top:556px;width:2px;height:177px;background:#f0f0f0"></div>
<div class="r" style="left:394px;top:601.8px;width:584px;height:1.2px;background:#cfcfcf"></div>
<div class="r" style="left:394px;top:620.3px;width:6px;height:1.2px;background:#cfcfcf"></div>
<div class="r" style="left:394px;top:641.2px;width:6px;height:1.2px;background:#cfcfcf"></div>
<div class="r" style="left:394px;top:662.6px;width:584px;height:1.2px;background:#cfcfcf"></div>
<div class="r" style="left:399.2px;top:602px;width:1.2px;height:67px;background:#cfcfcf"></div>
<div class="r" style="left:480.1px;top:663px;width:1.2px;height:6px;background:#cfcfcf"></div>
<div class="r" style="left:560.4px;top:663px;width:1.2px;height:6px;background:#cfcfcf"></div>
<div class="r" style="left:640.7px;top:663px;width:1.2px;height:6px;background:#cfcfcf"></div>
<div class="r" style="left:721px;top:663px;width:1.2px;height:6px;background:#cfcfcf"></div>
<div class="r" style="left:801.3px;top:663px;width:1.2px;height:6px;background:#cfcfcf"></div>
<div class="r" style="left:881.6px;top:663px;width:1.2px;height:6px;background:#cfcfcf"></div>
<div class="r" style="left:977.9px;top:663px;width:1.2px;height:6px;background:#cfcfcf"></div>
<div class="t" style="right:923.1px;top:599.1999999999999px;font-size:10.4px;color:#111">1.871e-2</div>
<div class="t" style="right:923.1px;top:615.5px;font-size:10.4px;color:#111">1.2e-2</div>
<div class="t" style="right:923.1px;top:635.5999999999999px;font-size:10.4px;color:#111">4.e-3</div>
<div class="t" style="right:923.1px;top:658.0px;font-size:10.4px;color:#111">-4.559e-3</div>
<div class="t" style="left:396.9px;top:672px;font-size:10.3px;color:#111;">0.</div>
<div class="t" style="left:478.2px;top:672px;font-size:10.3px;color:#111;">0.1</div>
<div class="t" style="left:558.3px;top:672px;font-size:10.3px;color:#111;">0.2</div>
<div class="t" style="left:638.2px;top:672px;font-size:10.3px;color:#111;">0.3</div>
<div class="t" style="left:718.9px;top:672px;font-size:10.3px;color:#111;">0.4</div>
<div class="t" style="left:799.8px;top:672px;font-size:10.3px;color:#111;">0.5</div>
<div class="t" style="left:881px;top:672px;font-size:10.3px;color:#111;">0.6</div>
<div class="t" style="left:958.6px;top:672px;font-size:10.3px;color:#111;">0.72</div>
<div class="t" style="left:683.2px;top:695px;font-size:10.8px;color:#000;font-weight:bold;-webkit-text-stroke:0.1px currentColor;">[s]</div>
<div class="t" style="left:332px;top:624px;font-size:11px;font-weight:bold;transform:rotate(-90deg);transform-origin:7px 7px;width:27px">[m]</div>
<div class="t" style="left:958.6px;top:583.6px;font-size:10.5px;color:#000;font-weight:bold;-webkit-text-stroke:0.1px currentColor;">0.72</div>
<svg style="left:0;top:0" width="1313" height="782"><polyline points="423.9,660.5 448.0,658.7 472.1,655.8 496.1,654.8 520.2,652.1 544.3,651.4 568.4,651.3 592.5,651.5 616.6,652.2 640.6,652.8 664.7,653.5 688.8,654.3 712.9,655.0 737.0,655.7 761.1,656.5 785.1,657.2 809.2,658.0 833.3,658.7 857.4,659.4 881.5,660.2 905.6,660.9 929.6,661.6 953.7,662.4 977.8,663.1" fill="none" stroke="#d02020" stroke-width="1.1"/><polyline points="423.9,646.7 448.0,647.4 472.1,648.4 496.1,648.9 520.2,649.8 544.3,650.0 568.4,648.7 592.5,647.6 616.6,645.2 640.6,643.3 664.7,640.6 688.8,637.8 712.9,634.8 737.0,631.9 761.1,628.9 785.1,625.9 809.2,623.0 833.3,620.0 857.4,617.0 881.5,614.1 905.6,611.1 929.6,608.1 953.7,605.2 977.8,602.2" fill="none" stroke="#20a020" stroke-width="1.1"/><circle cx="423.9" cy="646.7" r="1.5" fill="#208020"/><circle cx="448.0" cy="647.4" r="1.5" fill="#208020"/><circle cx="472.1" cy="648.4" r="1.5" fill="#208020"/><circle cx="496.1" cy="648.9" r="1.5" fill="#208020"/><circle cx="520.2" cy="649.8" r="1.5" fill="#208020"/><circle cx="544.3" cy="650.0" r="1.5" fill="#208020"/><circle cx="568.4" cy="648.7" r="1.5" fill="#208020"/><circle cx="592.5" cy="647.6" r="1.5" fill="#208020"/><circle cx="616.6" cy="645.2" r="1.5" fill="#208020"/><circle cx="640.6" cy="643.3" r="1.5" fill="#208020"/><circle cx="664.7" cy="640.6" r="1.5" fill="#208020"/><circle cx="688.8" cy="637.8" r="1.5" fill="#208020"/><circle cx="712.9" cy="634.8" r="1.5" fill="#208020"/><circle cx="737.0" cy="631.9" r="1.5" fill="#208020"/><circle cx="761.1" cy="628.9" r="1.5" fill="#208020"/><circle cx="785.1" cy="625.9" r="1.5" fill="#208020"/><circle cx="809.2" cy="623.0" r="1.5" fill="#208020"/><circle cx="833.3" cy="620.0" r="1.5" fill="#208020"/><circle cx="857.4" cy="617.0" r="1.5" fill="#208020"/><circle cx="881.5" cy="614.1" r="1.5" fill="#208020"/><circle cx="905.6" cy="611.1" r="1.5" fill="#208020"/><circle cx="929.6" cy="608.1" r="1.5" fill="#208020"/><circle cx="953.7" cy="605.2" r="1.5" fill="#208020"/><circle cx="977.8" cy="602.2" r="1.5" fill="#208020"/><circle cx="423.9" cy="660.5" r="1.5" fill="#c01010"/><circle cx="448.0" cy="658.7" r="1.5" fill="#c01010"/><circle cx="472.1" cy="655.8" r="1.5" fill="#c01010"/><circle cx="496.1" cy="654.8" r="1.5" fill="#c01010"/><circle cx="520.2" cy="652.1" r="1.5" fill="#c01010"/><circle cx="544.3" cy="651.4" r="1.5" fill="#c01010"/><circle cx="568.4" cy="651.3" r="1.5" fill="#c01010"/><circle cx="592.5" cy="651.5" r="1.5" fill="#c01010"/><circle cx="616.6" cy="652.2" r="1.5" fill="#c01010"/><circle cx="640.6" cy="652.8" r="1.5" fill="#c01010"/><circle cx="664.7" cy="653.5" r="1.5" fill="#c01010"/><circle cx="688.8" cy="654.3" r="1.5" fill="#c01010"/><circle cx="712.9" cy="655.0" r="1.5" fill="#c01010"/><circle cx="737.0" cy="655.7" r="1.5" fill="#c01010"/><circle cx="761.1" cy="656.5" r="1.5" fill="#c01010"/><circle cx="785.1" cy="657.2" r="1.5" fill="#c01010"/><circle cx="809.2" cy="658.0" r="1.5" fill="#c01010"/><circle cx="833.3" cy="658.7" r="1.5" fill="#c01010"/><circle cx="857.4" cy="659.4" r="1.5" fill="#c01010"/><circle cx="881.5" cy="660.2" r="1.5" fill="#c01010"/><circle cx="905.6" cy="660.9" r="1.5" fill="#c01010"/><circle cx="929.6" cy="661.6" r="1.5" fill="#c01010"/><circle cx="953.7" cy="662.4" r="1.5" fill="#c01010"/><circle cx="977.8" cy="663.1" r="1.5" fill="#c01010"/><rect x="976.6" y="598" width="2.6" height="65.5" fill="#000"/></svg>
<div class="r" style="left:400px;top:713.4px;width:579px;height:13.4px;background:#f0f0f0;border:1px solid #b0b0b0;border-radius:1px"></div>
<div class="t" style="left:686px;top:714.5px;font-size:10.5px;color:#111;">1</div>
<div class="r" style="left:310px;top:732.5px;width:687px;height:1px;background:#d8d8d8"></div>
<svg style="left:310px;top:733px" width="130" height="24" viewBox="0 0 130 24"><path d="M3 3.4L22.5 20.6H74L60.7 3.4" fill="#f2f2f2" stroke="#a0a0a0"/><path d="M60.7 3.4L74 20.6H116.4V3.4" fill="#f6f6f6" stroke="#a0a0a0"/><path d="M22.5 20.6H74" stroke="#c8c8c8"/></svg>
<div class="t" style="left:332px;top:739px;font-size:10.3px;color:#111;">Messages</div>
<div class="t" style="left:389.9px;top:739px;font-size:10.5px;color:#000;font-weight:bold;-webkit-text-stroke:0.1px currentColor;">Graph</div>
<svg style="left:293px;top:98px" width="8" height="10" viewBox="0 0 8 10"><path d="M1.5 0.5H6.5V5.5H7.5V6.5H0.5V5.5H1.5Z" fill="#fff" stroke="#000" stroke-width="1"/><path d="M4.6 1V5.5" stroke="#000" stroke-width="1.2"/><path d="M4 6.5V9.5" stroke="#000" stroke-width="1.1"/></svg>
<svg style="left:293px;top:468px" width="8" height="10" viewBox="0 0 8 10"><path d="M1.5 0.5H6.5V5.5H7.5V6.5H0.5V5.5H1.5Z" fill="#fff" stroke="#000" stroke-width="1"/><path d="M4.6 1V5.5" stroke="#000" stroke-width="1.2"/><path d="M4 6.5V9.5" stroke="#000" stroke-width="1.1"/></svg>
<svg style="left:984px;top:542px" width="8" height="10" viewBox="0 0 8 10"><path d="M1.5 0.5H6.5V5.5H7.5V6.5H0.5V5.5H1.5Z" fill="#fff" stroke="#000" stroke-width="1"/><path d="M4.6 1V5.5" stroke="#000" stroke-width="1.2"/><path d="M4 6.5V9.5" stroke="#000" stroke-width="1.1"/></svg>
<svg style="left:1297px;top:542px" width="8" height="10" viewBox="0 0 8 10"><path d="M1.5 0.5H6.5V5.5H7.5V6.5H0.5V5.5H1.5Z" fill="#fff" stroke="#000" stroke-width="1"/><path d="M4.6 1V5.5" stroke="#000" stroke-width="1.2"/><path d="M4 6.5V9.5" stroke="#000" stroke-width="1.1"/></svg>
<div class="r" style="left:1002px;top:556px;width:1px;height:200px;background:#808080"></div>
<div class="r" style="left:1003px;top:556.6px;width:255px;height:16.5px;background:#fff"></div>
<div class="r" style="left:1003.5px;top:556.6px;width:18px;height:16.5px;background:#f0f0f0"></div>
<div class="r" style="left:1003.5px;top:556.6px;width:1.2px;height:193px;background:#c8c8c8"></div>
<div class="r" style="left:1021.6px;top:556.6px;width:1.2px;height:193px;background:#c8c8c8"></div>
<div class="r" style="left:1068.9px;top:556.6px;width:1.2px;height:193px;background:#c8c8c8"></div>
<div class="r" style="left:1163.3px;top:556.6px;width:1.2px;height:193px;background:#c8c8c8"></div>
<div class="r" style="left:1257.8px;top:556.6px;width:1.2px;height:193px;background:#c8c8c8"></div>
<div class="r" style="left:1003px;top:572.6px;width:255px;height:1.2px;background:#a8a8a8"></div>
<div class="t" style="left:1025.3px;top:559.4px;font-size:10.5px;color:#111;">Time [s]</div>
<div class="r" style="left:1073px;top:560.1px;width:12.5px;height:11px;background:#fff;border:1px solid #888"></div>
<svg style="left:1075px;top:562.1px" width="9" height="8" viewBox="0 0 9 8"><path d="M1 4L3.5 6.5L8 1" stroke="#000" stroke-width="1.5" fill="none"/></svg>
<div class="t" style="left:1089.5px;top:559.2px;font-size:11.2px;color:#e02030;">Minimum [m]</div>
<div class="r" style="left:1167px;top:560.1px;width:12.5px;height:11px;background:#fff;border:1px solid #888"></div>
<svg style="left:1169px;top:562.1px" width="9" height="8" viewBox="0 0 9 8"><path d="M1 4L3.5 6.5L8 1" stroke="#000" stroke-width="1.5" fill="none"/></svg>
<div class="t" style="left:1183.4px;top:559.2px;font-size:11.2px;color:#30a030;">Maximum [m]</div>
<div class="r" style="left:1003.5px;top:573.1px;width:18.1px;height:15.68px;background:#f0f0f0;border-bottom:1px solid #c0c0c0;border-left:1px solid #fff"></div>
<div class="r" style="left:1022.8px;top:573.1px;width:235px;height:15.68px;background:#ebe9e5;border-bottom:1.2px solid #c8c8c8"></div>
<div class="r" style="left:1021.6px;top:573.1px;width:1.2px;height:15.68px;background:#c8c8c8"></div>
<div class="r" style="left:1068.9px;top:573.1px;width:1.2px;height:15.68px;background:#c8c8c8"></div>
<div class="r" style="left:1163.3px;top:573.1px;width:1.2px;height:15.68px;background:#c8c8c8"></div>
<div class="t" style="left:1005.9px;top:575.3000000000001px;font-size:10.5px;color:#111;">1</div>
<div class="t" style="left:1025.3px;top:575.3000000000001px;font-size:10.5px;color:#111;">3.e-002</div>
<div class="t" style="left:1073px;top:575.7px;font-size:10.1px;color:#111;">-3.5559e-003</div>
<div class="t" style="left:1165.7px;top:575.7px;font-size:10.1px;color:#111;">1.7007e-003</div>
<div class="r" style="left:1003.5px;top:588.78px;width:18.1px;height:15.68px;background:#f0f0f0;border-bottom:1px solid #c0c0c0;border-left:1px solid #fff"></div>
<div class="r" style="left:1022.8px;top:588.78px;width:235px;height:15.68px;background:#ebe9e5;border-bottom:1.2px solid #c8c8c8"></div>
<div class="r" style="left:1021.6px;top:588.78px;width:1.2px;height:15.68px;background:#c8c8c8"></div>
<div class="r" style="left:1068.9px;top:588.78px;width:1.2px;height:15.68px;background:#c8c8c8"></div>
<div class="r" style="left:1163.3px;top:588.78px;width:1.2px;height:15.68px;background:#c8c8c8"></div>
<div class="t" style="left:1005.9px;top:590.98px;font-size:10.5px;color:#111;">2</div>
<div class="t" style="left:1025.3px;top:590.98px;font-size:10.5px;color:#111;">6.e-002</div>
<div class="t" style="left:1073px;top:591.38px;font-size:10.1px;color:#111;">-2.8836e-003</div>
<div class="t" style="left:1165.7px;top:591.38px;font-size:10.1px;color:#111;">1.4335e-003</div>
<div class="r" style="left:1003.5px;top:604.46px;width:18.1px;height:15.68px;background:#f0f0f0;border-bottom:1px solid #c0c0c0;border-left:1px solid #fff"></div>
<div class="r" style="left:1022.8px;top:604.46px;width:235px;height:15.68px;background:#ebe9e5;border-bottom:1.2px solid #c8c8c8"></div>
<div class="r" style="left:1021.6px;top:604.46px;width:1.2px;height:15.68px;background:#c8c8c8"></div>
<div class="r" style="left:1068.9px;top:604.46px;width:1.2px;height:15.68px;background:#c8c8c8"></div>
<div class="r" style="left:1163.3px;top:604.46px;width:1.2px;height:15.68px;background:#c8c8c8"></div>
<div class="t" style="left:1005.9px;top:606.6600000000001px;font-size:10.5px;color:#111;">3</div>
<div class="t" style="left:1025.3px;top:606.6600000000001px;font-size:10.5px;color:#111;">9.e-002</div>
<div class="t" style="left:1073px;top:607.0600000000001px;font-size:10.1px;color:#111;">-1.7659e-003</div>
<div class="t" style="left:1165.7px;top:607.0600000000001px;font-size:10.1px;color:#111;">1.0457e-003</div>
<div class="r" style="left:1003.5px;top:620.14px;width:18.1px;height:15.68px;background:#f0f0f0;border-bottom:1px solid #c0c0c0;border-left:1px solid #fff"></div>
<div class="r" style="left:1022.8px;top:620.14px;width:235px;height:15.68px;background:#ebe9e5;border-bottom:1.2px solid #c8c8c8"></div>
<div class="r" style="left:1021.6px;top:620.14px;width:1.2px;height:15.68px;background:#c8c8c8"></div>
<div class="r" style="left:1068.9px;top:620.14px;width:1.2px;height:15.68px;background:#c8c8c8"></div>
<div class="r" style="left:1163.3px;top:620.14px;width:1.2px;height:15.68px;background:#c8c8c8"></div>
<div class="t" style="left:1005.9px;top:622.34px;font-size:10.5px;color:#111;">4</div>
<div class="t" style="left:1025.3px;top:622.34px;font-size:10.5px;color:#111;">0.12</div>
<div class="t" style="left:1073px;top:622.74px;font-size:10.1px;color:#111;">-1.3827e-003</div>
<div class="t" style="left:1165.7px;top:622.74px;font-size:10.1px;color:#111;">8.5551e-004</div>
<div class="r" style="left:1003.5px;top:635.82px;width:18.1px;height:15.68px;background:#f0f0f0;border-bottom:1px solid #c0c0c0;border-left:1px solid #fff"></div>
<div class="r" style="left:1022.8px;top:635.82px;width:235px;height:15.68px;background:#ebe9e5;border-bottom:1.2px solid #c8c8c8"></div>
<div class="r" style="left:1021.6px;top:635.82px;width:1.2px;height:15.68px;background:#c8c8c8"></div>
<div class="r" style="left:1068.9px;top:635.82px;width:1.2px;height:15.68px;background:#c8c8c8"></div>
<div class="r" style="left:1163.3px;top:635.82px;width:1.2px;height:15.68px;background:#c8c8c8"></div>
<div class="t" style="left:1005.9px;top:638.0200000000001px;font-size:10.5px;color:#111;">5</div>
<div class="t" style="left:1025.3px;top:638.0200000000001px;font-size:10.5px;color:#111;">0.15</div>
<div class="t" style="left:1073px;top:638.4200000000001px;font-size:10.1px;color:#111;">-3.4575e-004</div>
<div class="t" style="left:1165.7px;top:638.4200000000001px;font-size:10.1px;color:#111;">5.1891e-004</div>
<div class="r" style="left:1003.5px;top:651.5px;width:18.1px;height:15.68px;background:#f0f0f0;border-bottom:1px solid #c0c0c0;border-left:1px solid #fff"></div>
<div class="r" style="left:1022.8px;top:651.5px;width:235px;height:15.68px;background:#ebe9e5;border-bottom:1.2px solid #c8c8c8"></div>
<div class="r" style="left:1021.6px;top:651.5px;width:1.2px;height:15.68px;background:#c8c8c8"></div>
<div class="r" style="left:1068.9px;top:651.5px;width:1.2px;height:15.68px;background:#c8c8c8"></div>
<div class="r" style="left:1163.3px;top:651.5px;width:1.2px;height:15.68px;background:#c8c8c8"></div>
<div class="t" style="left:1005.9px;top:653.7px;font-size:10.5px;color:#111;">6</div>
<div class="t" style="left:1025.3px;top:653.7px;font-size:10.5px;color:#111;">0.18</div>
<div class="t" style="left:1073px;top:654.1px;font-size:10.1px;color:#111;">-8.8389e-005</div>
<div class="t" style="left:1165.7px;top:654.1px;font-size:10.1px;color:#111;">4.2877e-004</div>
<div class="r" style="left:1003.5px;top:667.1800000000001px;width:18.1px;height:15.68px;background:#f0f0f0;border-bottom:1px solid #c0c0c0;border-left:1px solid #fff"></div>
<div class="r" style="left:1022.8px;top:667.1800000000001px;width:235px;height:15.68px;background:#ebe9e5;border-bottom:1.2px solid #c8c8c8"></div>
<div class="r" style="left:1021.6px;top:667.1800000000001px;width:1.2px;height:15.68px;background:#c8c8c8"></div>
<div class="r" style="left:1068.9px;top:667.1800000000001px;width:1.2px;height:15.68px;background:#c8c8c8"></div>
<div class="r" style="left:1163.3px;top:667.1800000000001px;width:1.2px;height:15.68px;background:#c8c8c8"></div>
<div class="t" style="left:1005.9px;top:669.3800000000001px;font-size:10.5px;color:#111;">7</div>
<div class="t" style="left:1025.3px;top:669.3800000000001px;font-size:10.5px;color:#111;">0.21</div>
<div class="t" style="left:1073px;top:669.7800000000001px;font-size:10.1px;color:#111;">-4.9856e-005</div>
<div class="t" style="left:1165.7px;top:669.7800000000001px;font-size:10.1px;color:#111;">9.3931e-004</div>
<div class="r" style="left:1003.5px;top:682.86px;width:18.1px;height:15.68px;background:#f0f0f0;border-bottom:1px solid #c0c0c0;border-left:1px solid #fff"></div>
<div class="r" style="left:1022.8px;top:682.86px;width:235px;height:15.68px;background:#ebe9e5;border-bottom:1.2px solid #c8c8c8"></div>
<div class="r" style="left:1021.6px;top:682.86px;width:1.2px;height:15.68px;background:#c8c8c8"></div>
<div class="r" style="left:1068.9px;top:682.86px;width:1.2px;height:15.68px;background:#c8c8c8"></div>
<div class="r" style="left:1163.3px;top:682.86px;width:1.2px;height:15.68px;background:#c8c8c8"></div>
<div class="t" style="left:1005.9px;top:685.0600000000001px;font-size:10.5px;color:#111;">8</div>
<div class="t" style="left:1025.3px;top:685.0600000000001px;font-size:10.5px;color:#111;">0.24</div>
<div class="t" style="left:1073px;top:685.46px;font-size:10.1px;color:#111;">-1.2849e-004</div>
<div class="t" style="left:1165.7px;top:685.46px;font-size:10.1px;color:#111;">1.3634e-003</div>
<div class="r" style="left:1003.5px;top:698.54px;width:18.1px;height:15.68px;background:#f0f0f0;border-bottom:1px solid #c0c0c0;border-left:1px solid #fff"></div>
<div class="r" style="left:1022.8px;top:698.54px;width:235px;height:15.68px;background:#ebe9e5;border-bottom:1.2px solid #c8c8c8"></div>
<div class="r" style="left:1021.6px;top:698.54px;width:1.2px;height:15.68px;background:#c8c8c8"></div>
<div class="r" style="left:1068.9px;top:698.54px;width:1.2px;height:15.68px;background:#c8c8c8"></div>
<div class="r" style="left:1163.3px;top:698.54px;width:1.2px;height:15.68px;background:#c8c8c8"></div>
<div class="t" style="left:1005.9px;top:700.74px;font-size:10.5px;color:#111;">9</div>
<div class="t" style="left:1025.3px;top:700.74px;font-size:10.5px;color:#111;">0.27</div>
<div class="t" style="left:1073px;top:701.14px;font-size:10.1px;color:#111;">-3.9868e-004</div>
<div class="t" style="left:1165.7px;top:701.14px;font-size:10.1px;color:#111;">2.2932e-003</div>
<div class="r" style="left:1003.5px;top:714.22px;width:18.1px;height:15.68px;background:#f0f0f0;border-bottom:1px solid #c0c0c0;border-left:1px solid #fff"></div>
<div class="r" style="left:1022.8px;top:714.22px;width:235px;height:15.68px;background:#ebe9e5;border-bottom:1.2px solid #c8c8c8"></div>
<div class="r" style="left:1021.6px;top:714.22px;width:1.2px;height:15.68px;background:#c8c8c8"></div>
<div class="r" style="left:1068.9px;top:714.22px;width:1.2px;height:15.68px;background:#c8c8c8"></div>
<div class="r" style="left:1163.3px;top:714.22px;width:1.2px;height:15.68px;background:#c8c8c8"></div>
<div class="t" style="left:1005.9px;top:716.4200000000001px;font-size:10.5px;color:#111;">10</div>
<div class="t" style="left:1025.3px;top:716.4200000000001px;font-size:10.5px;color:#111;">0.3</div>
<div class="t" style="left:1073px;top:716.82px;font-size:10.1px;color:#111;">-6.1036e-004</div>
<div class="t" style="left:1165.7px;top:716.82px;font-size:10.1px;color:#111;">3.019e-003</div>
<div class="r" style="left:1003.5px;top:729.9000000000001px;width:18.1px;height:15.68px;background:#f0f0f0;border-bottom:1px solid #c0c0c0;border-left:1px solid #fff"></div>
<div class="r" style="left:1022.8px;top:729.9000000000001px;width:235px;height:15.68px;background:#ebe9e5;border-bottom:1.2px solid #c8c8c8"></div>
<div class="r" style="left:1021.6px;top:729.9000000000001px;width:1.2px;height:15.68px;background:#c8c8c8"></div>
<div class="r" style="left:1068.9px;top:729.9000000000001px;width:1.2px;height:15.68px;background:#c8c8c8"></div>
<div class="r" style="left:1163.3px;top:729.9000000000001px;width:1.2px;height:15.68px;background:#c8c8c8"></div>
<div class="t" style="left:1005.9px;top:732.1000000000001px;font-size:10.5px;color:#111;">11</div>
<div class="t" style="left:1025.3px;top:732.1000000000001px;font-size:10.5px;color:#111;">0.33</div>
<div class="t" style="left:1073px;top:732.5000000000001px;font-size:10.1px;color:#111;">-8.9917e-004</div>
<div class="t" style="left:1165.7px;top:732.5000000000001px;font-size:10.1px;color:#111;">4.0522e-003</div>
<div class="r" style="left:1003.5px;top:745.58px;width:18.1px;height:15.68px;background:#f0f0f0;border-bottom:1px solid #c0c0c0;border-left:1px solid #fff"></div>
<div class="r" style="left:1022.8px;top:745.58px;width:235px;height:15.68px;background:#ebe9e5;border-bottom:1.2px solid #c8c8c8"></div>
<div class="r" style="left:1021.6px;top:745.58px;width:1.2px;height:15.68px;background:#c8c8c8"></div>
<div class="r" style="left:1068.9px;top:745.58px;width:1.2px;height:15.68px;background:#c8c8c8"></div>
<div class="r" style="left:1163.3px;top:745.58px;width:1.2px;height:15.68px;background:#c8c8c8"></div>
<div class="t" style="left:1005.9px;top:747.7800000000001px;font-size:10.5px;color:#111;">12</div>
<div class="t" style="left:1025.3px;top:747.7800000000001px;font-size:10.5px;color:#111;">0.36</div>
<div class="t" style="left:1073px;top:748.1800000000001px;font-size:10.1px;color:#111;">-1.1865e-003</div>
<div class="t" style="left:1165.7px;top:748.1800000000001px;font-size:10.1px;color:#111;">5.1088e-003</div>
<div class="r" style="left:1003px;top:573.1px;width:1px;height:185px;background:#fff"></div>
<div class="r" style="left:1258.5px;top:556.6px;width:37px;height:192px;background:#a0a0a0"></div>
<div class="r" style="left:1295px;top:556.6px;width:15px;height:192px;background:#f0f0f0"></div>
<svg style="left:1298px;top:562px" width="10" height="6"><path d="M0.5 5L4.5 1L8.5 5Z" fill="#333"/></svg>
<svg style="left:1298px;top:741px" width="10" height="6"><path d="M0.5 1L4.5 5L8.5 1Z" fill="#333"/></svg>
<div class="r" style="left:1297px;top:573.5px;width:12px;height:78px;background:linear-gradient(90deg,#e8e8e8,#f4f4f4 40%,#d0d0d0);border:1px solid #b8b8b8;border-radius:2px"></div>
<svg style="left:1299px;top:609px" width="8" height="6"><path d="M0 0.5H7M0 2.5H7M0 4.5H7" stroke="#777"/></svg>
<div class="r" style="left:1310px;top:93px;width:3px;height:440px;background:#f8f8f8"></div>
<div class="r" style="left:1308.5px;top:515px;width:1.2px;height:16px;background:#111"></div>
<div class="r" style="left:1310px;top:531px;width:3px;height:25px;background:#f0f0f0"></div>
<div class="r" style="left:1px;top:756px;width:1312px;height:23px;background:#f0f0f0"></div>
<div class="r" style="left:1px;top:756.5px;width:1312px;height:1px;background:#dadada"></div>
<div class="r" style="left:2px;top:760.5px;width:351px;height:18px;border:1px solid;border-color:#a8a8a8 #fff #fff #a8a8a8"></div>
<div class="r" style="left:356px;top:760.5px;width:169px;height:18px;border:1px solid;border-color:#a8a8a8 #fff #fff #a8a8a8"></div>
<div class="r" style="left:528px;top:760.5px;width:140px;height:18px;border:1px solid;border-color:#a8a8a8 #fff #fff #a8a8a8"></div>
<div class="r" style="left:671px;top:760.5px;width:312px;height:18px;border:1px solid;border-color:#a8a8a8 #fff #fff #a8a8a8"></div>
<div class="r" style="left:986px;top:760.5px;width:323px;height:18px;border:1px solid;border-color:#a8a8a8 #fff #fff #a8a8a8"></div>
<svg style="left:528px;top:762px" width="16" height="15" viewBox="0 0 16 15"><path d="M2 3C2 1 14 1 14 3V9C14 11 8 11 6 11L2 14.5L3 10.5C2 10 2 9 2 9Z" fill="#f0d040" stroke="#a08020" stroke-width="0.8"/><circle cx="8.5" cy="5" r="4.5" fill="#1a50d0"/><rect x="7.8" y="4" width="1.5" height="4" fill="#fff"/><rect x="7.8" y="1.8" width="1.5" height="1.4" fill="#fff"/></svg>
<div class="t" style="left:546.8px;top:764.2px;font-size:10.5px;color:#111;">1 Message</div>
<div class="t" style="left:672.3px;top:764.2px;font-size:10.5px;color:#111;">No Selection</div>
<div class="t" style="left:988px;top:764.2px;font-size:10.8px;color:#111;">Metric (m, kg, N, s, V, A)</div>
<div class="t" style="left:1115.4px;top:764.2px;font-size:10.5px;color:#111;">Degrees</div>
<div class="t" style="left:1164.5px;top:764.2px;font-size:10.5px;color:#111;">rad/s</div>
<div class="t" style="left:1200.4px;top:764.2px;font-size:10.5px;color:#111;">Ce</div>
<div class="r" style="left:0px;top:779px;width:1313px;height:3px;background:#1e3048"></div>
<div class="r" style="left:150px;top:779px;width:1px;height:3px;background:#6a8ab0"></div>
<div class="r" style="left:1212.5px;top:746.5px;width:69px;height:32px;background:linear-gradient(180deg,#ffffff,#e4e5f0);border:1px solid #767676;border-radius:2px"></div>
<div class="t" style="left:1215.4px;top:749px;font-size:10.6px;color:#575757;">21 April 2014</div>
<div class="t" style="left:1215.4px;top:762.2px;font-size:10.6px;color:#575757;">Monday</div>
<svg style="left:1296px;top:764px" width="14" height="14" viewBox="0 0 14 14"><path d="M13 2L2 13M13 6L6 13M13 10L10 13" stroke="#b0b0b0" stroke-width="1"/></svg>
<div class="t" style="left:1118.5px;top:-2.1px;font-family:'Liberation Serif',serif;font-size:31.8px;transform:scaleX(0.95);transform-origin:0 0;color:#c6c6c6;-webkit-text-stroke:0.7px currentColor;text-shadow:-1px -1px 0 rgba(255,255,255,0.8),1px -1px 0 rgba(255,255,255,0.8),-1px 1px 0 rgba(255,255,255,0.8),1px 1px 0 rgba(255,255,255,0.8),1.5px 2px 2px rgba(0,0,0,0.15)">programy.net<span style="color:#bcd2ee">.pl</span></div>
<div class="t" style="left:6.4px;top:747.6px;font-family:'Liberation Serif',serif;font-size:31.8px;transform:scaleX(0.95);transform-origin:0 0;color:#c6c6c6;-webkit-text-stroke:0.7px currentColor;text-shadow:-1px -1px 0 rgba(255,255,255,0.8),1px -1px 0 rgba(255,255,255,0.8),-1px 1px 0 rgba(255,255,255,0.8),1px 1px 0 rgba(255,255,255,0.8),1.5px 2px 2px rgba(0,0,0,0.15)">programy.net<span style="color:#bcd2ee">.pl</span></div>
<div class="t" style="left:560.6px;top:369px;font-family:'Liberation Serif',serif;font-size:31.8px;transform:scaleX(0.95);transform-origin:0 0;-webkit-text-stroke:0.5px currentColor;color:rgba(165,175,195,0.38);text-shadow:1px 1.5px 1px rgba(0,0,30,0.3)">programy.net<span style="color:rgba(150,190,230,0.38)">.pl</span></div></body></html>
